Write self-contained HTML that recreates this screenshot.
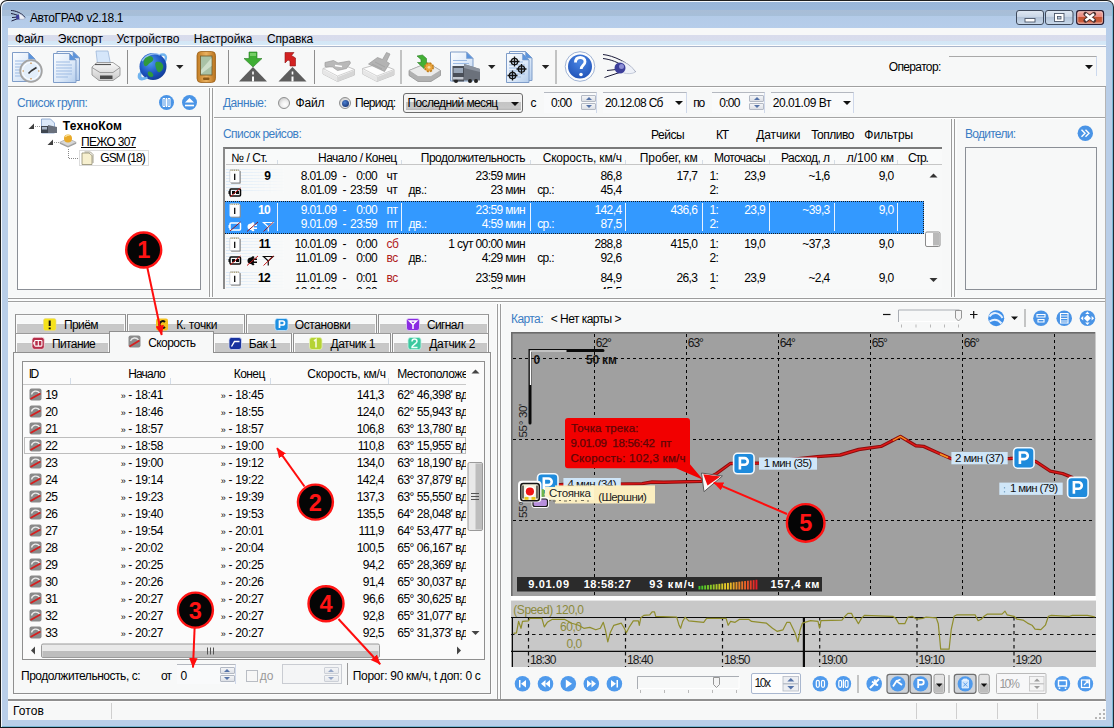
<!DOCTYPE html>
<html><head><meta charset="utf-8">
<style>
*{box-sizing:border-box;margin:0;padding:0}
html,body{width:1114px;height:728px;overflow:hidden}
body{font-family:"Liberation Sans",sans-serif;font-size:11px;color:#000;background:#fff;position:relative}
.a{position:absolute}
.t{position:absolute;white-space:nowrap;line-height:13px;font-size:11px}
.bl{color:#3b7dc4}
.r{text-align:right}
#frame{left:0;top:0;width:1114px;height:728px;background:linear-gradient(#98b5d8 0,#9bb8da 8.500px,#a9bdd6 9px,#a6bfd9 14.500px,#b3cbe8 15.500px,#b6cdea 27px,#b9cee8 60px,#b9cee8 100%);border:1px solid #1e1e1e;border-right:1.500px solid #1e2a36;border-bottom:1.500px solid #101820;border-radius:7px 7px 0 0;box-shadow:inset 1px 1px 0 #f4f8fc,inset -1px -1px 0 #7ab8d4}
#client{left:8px;top:28px;width:1098px;height:692px;background:#f7f8f8}
#menubar{left:8px;top:28px;width:1098px;height:19px;background:linear-gradient(#f7f8f8 0,#f7f8f8 7px,#d9dcec 7.500px,#d8dded 13px,#d4e7f6 13.500px,#d6e9f7 17px,#fdfdfe 17px,#fdfdfe 18px,#a9b5cb 18px)}
#menubar .t{font-size:12px;top:2px;line-height:14px}
.sepv{position:absolute;width:1px;background:#9a9a9a}
.box{position:absolute;background:#fff;border:1px solid #828790}

.sp{position:absolute;width:15px;height:7px;border:1px solid #b3b9c4;background:linear-gradient(#f4f5f7,#dde0e6);border-radius:1px}
.sp:after{content:"";position:absolute;left:3.500px;top:1px;border:3.500px solid transparent}
.sp.u:after{border-bottom:3.500px solid #5573a8;border-top:0}
.sp.d:after{border-top:3.500px solid #5573a8;border-bottom:0;top:1.500px}
.fld{position:absolute;height:21px;border-top:1px solid #b4b8c0;border-right:1px solid #cfd8ea;background:#f9fafb}
.rad{position:absolute;width:12px;height:12px;border-radius:6px;border:1px solid #8e8f8f;background:radial-gradient(circle at 60% 65%,#fff 0,#efefef 40%,#b9b9b9 100%)}
.th{position:absolute;white-space:nowrap;font-size:11px;line-height:13px;top:153px}
.row{position:absolute;left:225px;width:699px;height:33px}
.row .t{top:auto}
</style></head><body>
<div id="frame" class="a"></div>
<div style="position:absolute;white-space:pre;line-height:13px;left:30.00px;top:11.84px;font-size:12px;letter-spacing:-0.385px;">АвтоГРАФ v2.18.1</div>
<div id="client" class="a"></div>
<div id="menubar" class="a"></div>
<div style="position:absolute;white-space:pre;line-height:13px;left:15.10px;top:32.54px;font-size:12px;letter-spacing:-0.305px;">Файл</div>
<div style="position:absolute;white-space:pre;line-height:13px;left:57.80px;top:32.54px;font-size:12px;letter-spacing:0.018px;">Экспорт</div>
<div style="position:absolute;white-space:pre;line-height:13px;left:116.50px;top:32.54px;font-size:12px;letter-spacing:0.024px;">Устройство</div>
<div style="position:absolute;white-space:pre;line-height:13px;left:193.70px;top:32.54px;font-size:12px;letter-spacing:-0.035px;">Настройка</div>
<div style="position:absolute;white-space:pre;line-height:13px;left:267.00px;top:32.54px;font-size:12px;letter-spacing:-0.146px;">Справка</div>

<svg class="a" style="left:8px;top:47px" width="1098" height="41" viewBox="8 47 1098 41">
<defs>
<linearGradient id="gdoc" x1="0" y1="0" x2="1" y2="1"><stop offset="0" stop-color="#fbfdff"/><stop offset="0.600" stop-color="#dbe8f8"/><stop offset="1" stop-color="#b4cdec"/></linearGradient>
<linearGradient id="ggray" x1="0" y1="0" x2="0" y2="1"><stop offset="0" stop-color="#fafafa"/><stop offset="1" stop-color="#c9c9c9"/></linearGradient>
<radialGradient id="gglobe" cx="0.4" cy="0.35" r="0.7"><stop offset="0" stop-color="#4f9bf0"/><stop offset="0.6" stop-color="#1c55c2"/><stop offset="1" stop-color="#123a93"/></radialGradient>
<radialGradient id="ghelp" cx="0.5" cy="0.3" r="0.8"><stop offset="0" stop-color="#4a86e4"/><stop offset="1" stop-color="#1c4db3"/></radialGradient>
<linearGradient id="gpda" x1="0" y1="0" x2="1" y2="0"><stop offset="0" stop-color="#c27c22"/><stop offset="0.5" stop-color="#eab160"/><stop offset="1" stop-color="#b8721c"/></linearGradient>
<g id="doc"><path d="M0.5 0.5h16l6.500 6.500v22.500h-22.500z" fill="url(#gdoc)" stroke="#7f9dc9"/><path d="M16.500 0.500v6.500h6.500z" fill="#5b94dd" stroke="#7f9dc9" stroke-width="0.600"/><path d="M3 9h14M3 12h16M3 15h16M3 18h16M3 21h16M3 24h12" stroke="#9dbbe3" stroke-width="1"/></g>
<g id="road"><path d="M14 0L0 14.500h28z" fill="#5d5d5d"/><path d="M13.200 4.500h1.600v3h-1.600zM13 9.500h2v5h-2z" fill="#fff"/></g>
<path id="dd" d="M0 0h7.500l-3.750 4z" fill="#222"/>
</defs>
<rect x="8" y="47" width="1098" height="39" fill="#f7f8f8"/>
<rect x="8" y="86" width="1098" height="1" fill="#a0a0a0"/>
<rect x="8" y="87" width="1098" height="1" fill="#ffffff"/>
<!-- icon1 doc+clock -->
<use href="#doc" x="12" y="52"/>
<circle cx="31" cy="71" r="10.800" fill="#e3eefa" stroke="#a3a3a3" stroke-width="1.800"/>
<circle cx="31" cy="71" r="8.600" fill="none" stroke="#fff" stroke-width="1"/>
<path d="M31 71l5.500-3.500M31 71l-2.500 2.500" stroke="#333" stroke-width="1.600"/>
<path d="M31 62.500v1.500M31 78v1.500M22.500 71h1.500M38 71h1.500" stroke="#c7873a" stroke-width="1.200"/>
<!-- icon2 docs -->
<use href="#doc" x="56.500" y="51"/>
<use href="#doc" x="53" y="53"/>
<!-- icon3 printer -->
<path d="M96 51h12l2.500 13h-13z" fill="#d5e6fa" stroke="#9db6d8" stroke-width="0.800"/>
<path d="M92 67l5-4.500h16l7 5v8l-7 5h-14l-7-5.500z" fill="url(#ggray)" stroke="#8a8a8a" stroke-width="0.800"/>
<path d="M92 67.500l8 5h13l7-5" fill="none" stroke="#8a8a8a" stroke-width="0.800"/>
<path d="M100 75.500h12.500v3.500h-12.500z" fill="#4b4b4b"/>
<path d="M95 64.500h16" stroke="#555" stroke-width="1.200"/>
<rect x="127" y="50" width="1" height="34" fill="#8e8e8e"/>
<!-- globe -->
<ellipse cx="153" cy="66.500" rx="16.500" ry="6" transform="rotate(-42 153 66.500)" fill="none" stroke="#6fb3ef" stroke-width="2.400"/>
<circle cx="153" cy="66.500" r="13.500" fill="url(#gglobe)"/>
<path d="M146 57c3-2 6-1 7 1s-1 4-3 5-3 4-5 3-2-6 1-9zM156 62c3-1 6 0 7 3s-1 6-3 7-3-1-4-4 -1-5 0-6zM148 72c2-1 4 0 5 2s0 3-2 3-4-3-3-5z" fill="#2f9a3c"/>
<path d="M142 61c4-6 12-9 18-6" fill="none" stroke="#bfe0ff" stroke-width="1.500" opacity="0.700"/>
<path d="M139.500 73.500a16.500 6 -42 0 0 8 4" fill="none" stroke="#6fb3ef" stroke-width="2.400"/>
<use href="#dd" x="176" y="65"/>
<!-- pda -->
<rect x="197" y="51.500" width="18.500" height="31" rx="4" fill="url(#gpda)" stroke="#9a611a" stroke-width="0.800"/>
<rect x="200.500" y="56" width="11.500" height="19" fill="#a9c2a6" stroke="#6f5a2a" stroke-width="0.800"/>
<path d="M201 70l10.500-12v8l-10.500 8z" fill="#d6e5d2" opacity="0.800"/>
<rect x="203" y="77.500" width="6.500" height="2.500" rx="1" fill="#8d5a18"/>
<rect x="228" y="50" width="1" height="34" fill="#8e8e8e"/>
<!-- roads -->
<use href="#road" x="239" y="67"/>
<path d="M249 52h8v6.500h5l-9 8.500-9-8.500h5z" fill="#3fae34" stroke="#2a7c25" stroke-width="0.600"/>
<path d="M250 53h6v3h-6z" fill="#8fdc7c" opacity="0.700"/>
<use href="#road" x="278.500" y="67"/>
<path d="M285 52.500h9l-2.500 3 4 2.500v8h-5.500v-5l-2-1-3 3z" fill="#d32222" stroke="#8e1414" stroke-width="0.600"/>
<rect x="314" y="50" width="1" height="34" fill="#8e8e8e"/>
<!-- scanners -->
<g id="scn"><path d="M323 68.500L340 63.500 354.500 69.500 354.500 75 337.500 81.500 323 74z" fill="#fdfdfd" stroke="#bcbcbc" stroke-width="0.900" stroke-linejoin="round"/>
<path d="M323 68.500L337.500 76 354.500 69.500M337.500 76v5.500" fill="none" stroke="#cdcdcd" stroke-width="0.900"/>
<path d="M323 69.500L337.500 77 337.500 81.500 323 74z" fill="#e6e6e6"/><path d="M337.500 77L354.500 70.300 354.500 75 337.500 81.500z" fill="#d6d6d6"/></g>
<path d="M325 62.500l8.500-2 4.500 2.500 11.500-2 1 2-4 5.500-9 2-5-3.500-7.500-0.500z" fill="#b9b9b9" stroke="#9c9c9c" stroke-width="0.700" stroke-linejoin="round"/>
<path d="M335 65.500l7 1" stroke="#fff" stroke-width="1.600"/>
<use href="#scn" x="39.500" y="0"/>
<path d="M386.500 52.500l3.500 1.500-3.500 7.500 3 2-5 8-16-7.500 9-6.500 5 2z" fill="#b3b3b3" stroke="#9a9a9a" stroke-width="0.700" stroke-linejoin="round"/>
<path d="M372 64l10 5M375 62l10 5" stroke="#9f9f9f" stroke-width="0.700"/>
<rect x="400.500" y="50" width="1" height="34" fill="#8e8e8e"/>
<!-- disk -->
<path d="M409 70.500L420 66 433 66 440.500 70.500 440.500 75.500 431 81.500 418 81.500 409 75.500z" fill="#b1b1b1" stroke="#8c8c8c" stroke-width="0.700" stroke-linejoin="round"/>
<path d="M409 70.500L420 66 433 66 440.500 70.500 431 76.500 418 76.500z" fill="#ebebeb" stroke="#a5a5a5" stroke-width="0.600"/>
<path d="M417 56l5.500-1 4 3.500v4.500l3 0-5.500 5.500-6.500-6h3.500v-3z" fill="#43b035" stroke="#2a7c25" stroke-width="0.600"/>
<circle cx="429" cy="67.300" r="4.200" fill="#eaa43c" stroke="#c07e1c" stroke-width="1.600" stroke-dasharray="2 1.300"/>
<circle cx="429" cy="67.300" r="1.400" fill="#f7d9a0"/>
<!-- truck doc -->
<use href="#doc" x="450" y="51.500"/>
<path d="M452.500 66h11.500v15.500h-11.500z" fill="#4a4f58"/>
<path d="M453.500 68h9.500v5h-9.500z" fill="#9aa7b8"/>
<path d="M464 64l16 5v11.500h-16z" fill="#6b717b"/>
<path d="M464 64l16 5v3l-16-4z" fill="#8b929d"/>
<circle cx="456" cy="81" r="2" fill="#222"/><circle cx="470" cy="81" r="2" fill="#222"/><circle cx="476" cy="81" r="2" fill="#222"/>
<path d="M453 77h10.500v2.500h-10.500z" fill="#c4c9d1"/>
<use href="#dd" x="488" y="65"/>
<!-- dice doc -->
<use href="#doc" x="509" y="51"/>
<use href="#doc" x="506" y="53"/>
<g fill="none" stroke="#111" stroke-width="1.300">
<circle cx="514.500" cy="61.500" r="3.200"/><path d="M514.500 56.500v10M509.500 61.500h10"/>
<circle cx="521.500" cy="69" r="3.200"/><path d="M521.500 64v10M516.500 69h10"/>
<circle cx="512.500" cy="75.500" r="3.200"/><path d="M512.500 70.500v10M507.500 75.500h10"/>
</g>
<use href="#dd" x="541.800" y="65"/>
<rect x="555.500" y="50" width="1" height="34" fill="#8e8e8e"/>
<!-- help -->
<circle cx="580" cy="66.500" r="14.800" fill="#fdfdfe" stroke="#9fb3d4" stroke-width="1"/>
<circle cx="580" cy="66.500" r="12" fill="url(#ghelp)"/>
<path d="M575.500 62.500c0-3.500 2-5 4.800-5s4.700 1.700 4.700 4.200c0 3.500-3.800 3.800-3.800 7.300" fill="none" stroke="#fff" stroke-width="2.800"/>
<circle cx="581" cy="74.500" r="1.800" fill="#fff"/>
<!-- eye -->
<path d="M603 54.500c10 1 26 8 32.500 17.500M603 58.500c8 1 16 4 20 8M607 70.500l14 -1.500M604.500 77.500l15-5" fill="none" stroke="#1b1b3a" stroke-width="1"/>
<path d="M621 61c6 2 12 6 14.500 11-3 2-8 2-12 1" fill="#eef1f8" stroke="#b9c0d2" stroke-width="0.800"/>
<circle cx="620" cy="68" r="5.500" fill="#3d3f9a"/>
<circle cx="621.500" cy="66.500" r="2.500" fill="#8c8fd6"/>
</svg>
<div style="position:absolute;white-space:pre;line-height:13px;left:888.70px;top:61.34px;font-size:12px;letter-spacing:-0.630px;">Оператор:</div>
<div class="a" style="left:949px;top:56px;width:148px;height:19.500px;border-top:1px solid #a9a9a9;border-right:1px solid #ccd9ee"></div>
<svg class="a" style="left:1084.500px;top:65px" width="8" height="5"><path d="M0 0h8l-4 4.200z" fill="#111"/></svg>


<div style="position:absolute;white-space:pre;line-height:13px;left:17.00px;top:97.04px;font-size:12px;letter-spacing:-0.468px;color:#3b7dc4">Список групп:</div>
<svg class="a" style="left:158px;top:94px" width="40" height="17" viewBox="158 94 40 17">
<circle cx="166.500" cy="102.500" r="7.500" fill="#4a94e6"/><circle cx="189.500" cy="102.500" r="7.500" fill="#4a94e6"/>
<path d="M163 98.500h2v8h-2zM168 98.500h2v8h-2z" fill="none" stroke="#fff" stroke-width="1"/><path d="M166.500 98v9" stroke="#fff" stroke-width="1"/>
<path d="M189.500 98l4.500 4.500h-9z" fill="#fff"/><path d="M185 105.500h9" stroke="#fff" stroke-width="1.600"/>
</svg>
<div class="box" style="left:17px;top:116px;width:184px;height:174px;border-color:#8b8f96"></div>
<svg class="a" style="left:18px;top:117px" width="182" height="60" viewBox="18 117 182 60">
<path d="M34 123.500v5.500h-5.500z" fill="#404040"/>
<path d="M35 126.500h5" stroke="#999" stroke-dasharray="1 1"/>
<path d="M41.500 119h9l4 4v10h-13z" fill="#dce9f9" stroke="#7f9dc9" stroke-width="0.800"/>
<path d="M41 126h7v7h-7z" fill="#3f4650"/><path d="M48 125l9 2v6h-9z" fill="#69707c"/><path d="M42 127h5v2.500h-5z" fill="#a9b6c8"/>
<path d="M53 139.500v5.500h-5.500z" fill="#404040"/>
<path d="M54 142.500h5" stroke="#999" stroke-dasharray="1 1"/>
<path d="M59.800 142.300L68 138.300 76.200 142.300 76.200 143.800 68 147.600 59.800 143.800z" fill="#9c9c9c"/><path d="M59.800 142.300L68 138.300 76.200 142.300 68 146.200z" fill="#d6d6d6" stroke="#a9a9a9" stroke-width="0.500"/>
<circle cx="68" cy="138.500" r="4" fill="#e9aa28"/><path d="M65.500 137a3 3 0 0 1 4-1.500" stroke="#fbe29a" stroke-width="1.200" fill="none"/>
<path d="M68.500 149v9.500h10" fill="none" stroke="#888" stroke-dasharray="1 1"/>
<rect x="79.500" y="150.500" width="69" height="15" fill="none" stroke="#b9b9b9" stroke-dasharray="1 1"/>
<path d="M82 153h7l3 2.500v9h-10z" fill="#f7f0cf" stroke="#8f8a70" stroke-width="0.800"/><path d="M84.500 152h6l2.500 2.500v8.500" fill="none" stroke="#8f8a70" stroke-width="0.800"/>
</svg>
<div style="position:absolute;white-space:pre;line-height:13px;left:62.80px;top:120.14px;font-size:12px;letter-spacing:0.189px;font-weight:bold">ТехноКом</div>
<div style="position:absolute;white-space:pre;line-height:13px;left:81.00px;top:135.94px;font-size:12px;letter-spacing:-0.663px;text-decoration:underline">ПЕЖО 307</div>
<div style="position:absolute;white-space:pre;line-height:13px;left:100.30px;top:152.34px;font-size:12px;letter-spacing:-0.945px;">GSM (18)</div>
<!-- v splitter -->
<div class="a" style="left:208px;top:88px;width:7px;height:210px;background:#fbfcfc"></div>
<div class="a" style="left:209px;top:88px;width:1px;height:210px;background:#9c9c9c"></div>
<div class="a" style="left:212px;top:88px;width:1px;height:210px;background:#9c9c9c"></div>
<div style="position:absolute;white-space:pre;line-height:13px;left:222.90px;top:97.04px;font-size:12px;letter-spacing:-0.448px;color:#3b7dc4">Данные:</div>
<div class="rad" style="left:278px;top:97px"></div>
<div style="position:absolute;white-space:pre;line-height:13px;left:295.50px;top:97.04px;font-size:12px;letter-spacing:-0.172px;">Файл</div>
<div class="rad" style="left:338.500px;top:97px"></div><div class="a" style="left:341.500px;top:100px;width:7px;height:7px;border-radius:3.500px;background:radial-gradient(circle at 40% 35%,#4a7fd0,#0e2460)"></div>
<div style="position:absolute;white-space:pre;line-height:13px;left:355.00px;top:97.04px;font-size:12px;letter-spacing:-0.737px;">Период:</div>
<div class="a" style="left:403px;top:92.500px;width:120px;height:20.500px;border:1px solid #6c6c6c;border-radius:3px;background:#f4f4f4"></div>
<div class="a" style="left:406px;top:96px;width:115px;height:14px;background:linear-gradient(#f3f3f3 0,#efefef 6px,#c4c4c4 6.500px,#c8c8c8 12px,#b4b4b4 14px)"></div>
<div style="position:absolute;white-space:pre;line-height:13px;left:407.50px;top:97.04px;font-size:12px;letter-spacing:-0.620px;">Последний месяц</div>
<svg class="a" style="left:510.500px;top:101.500px" width="8" height="4"><path d="M0 0h8l-4 4z" fill="#111"/></svg>
<div style="position:absolute;white-space:pre;line-height:13px;left:530.50px;top:97.04px;font-size:12px;letter-spacing:-0.300px;">с</div>
<div class="fld" style="left:543.6px;top:91.500px;width:53.9px"></div>
<div style="position:absolute;white-space:pre;line-height:13px;left:550.90px;top:97.04px;font-size:12px;letter-spacing:-0.653px;">0:00</div>
<div class="sp u" style="left:581.3px;top:95px"></div><div class="sp d" style="left:581.3px;top:102.500px"></div>
<div class="fld" style="left:603.3px;top:91.500px;width:83.7px"></div>
<div style="position:absolute;white-space:pre;line-height:13px;left:605.00px;top:97.04px;font-size:12px;letter-spacing:-0.709px;">20.12.08 Сб</div>
<svg class="a" style="left:674.9px;top:101px" width="8" height="4"><path d="M0 0h8l-4 4z" fill="#111"/></svg>
<div style="position:absolute;white-space:pre;line-height:13px;left:693.20px;top:97.04px;font-size:12px;letter-spacing:-1.172px;">по</div>
<div class="fld" style="left:711.6px;top:91.500px;width:53.4px"></div>
<div style="position:absolute;white-space:pre;line-height:13px;left:719.30px;top:97.04px;font-size:12px;letter-spacing:-0.720px;">0:00</div>
<div class="sp u" style="left:749.3px;top:95px"></div><div class="sp d" style="left:749.3px;top:102.500px"></div>
<div class="fld" style="left:770.7px;top:91.500px;width:83.8px"></div>
<div style="position:absolute;white-space:pre;line-height:13px;left:772.70px;top:97.04px;font-size:12px;letter-spacing:-0.436px;">20.01.09 Вт</div>
<svg class="a" style="left:843px;top:101px" width="8" height="4"><path d="M0 0h8l-4 4z" fill="#111"/></svg>
<div class="a" style="left:214px;top:117px;width:892px;height:1px;background:#a5a5a5"></div><div class="a" style="left:214px;top:118px;width:892px;height:1px;background:#fff"></div>
<div style="position:absolute;white-space:pre;line-height:13px;left:222.90px;top:128.34px;font-size:12px;letter-spacing:-0.533px;color:#3b7dc4">Список рейсов:</div>
<div style="position:absolute;white-space:pre;line-height:13px;left:651.00px;top:128.84px;font-size:12px;letter-spacing:-0.446px;">Рейсы</div>
<div style="position:absolute;white-space:pre;line-height:13px;left:716.10px;top:128.84px;font-size:12px;letter-spacing:-1.228px;">КТ</div>
<div style="position:absolute;white-space:pre;line-height:13px;left:756.30px;top:128.84px;font-size:12px;letter-spacing:-0.126px;">Датчики</div>
<div style="position:absolute;white-space:pre;line-height:13px;left:811.20px;top:128.84px;font-size:12px;letter-spacing:-0.481px;">Топливо</div>
<div style="position:absolute;white-space:pre;line-height:13px;left:864.30px;top:128.84px;font-size:12px;letter-spacing:-0.006px;">Фильтры</div>
<div class="a" style="left:223px;top:147px;width:719px;height:142.500px;background:#f8f9f9;border-top:2px solid #7a7a7a;border-left:2px solid #8a8a8a;overflow:hidden"></div>
<div class="a" style="left:226px;top:149px;width:716px;height:15.500px;background:#f9fafa;border-bottom:1px solid #c6c6c6"></div>
<div style="position:absolute;white-space:pre;line-height:13px;left:231.20px;top:151.84px;font-size:12px;letter-spacing:-0.424px;">№ / Ст.</div>
<div style="position:absolute;white-space:pre;line-height:13px;left:318.00px;top:151.84px;font-size:12px;letter-spacing:-0.497px;">Начало / Конец</div>
<div style="position:absolute;white-space:pre;line-height:13px;left:420.80px;top:151.84px;font-size:12px;letter-spacing:-0.506px;">Продолжительность</div>
<div style="position:absolute;white-space:pre;line-height:13px;left:542.70px;top:151.84px;font-size:12px;letter-spacing:-0.183px;">Скорость, км/ч</div>
<div style="position:absolute;white-space:pre;line-height:13px;left:639.70px;top:151.84px;font-size:12px;letter-spacing:-0.041px;">Пробег, км</div>
<div style="position:absolute;white-space:pre;line-height:13px;left:713.90px;top:151.84px;font-size:12px;letter-spacing:-0.596px;">Моточасы</div>
<div style="position:absolute;white-space:pre;line-height:13px;left:780.90px;top:151.84px;font-size:12px;letter-spacing:-0.504px;">Расход, л</div>
<div style="position:absolute;white-space:pre;line-height:13px;left:846.70px;top:151.84px;font-size:12px;letter-spacing:0.014px;">л/100 км</div>
<div style="position:absolute;white-space:pre;line-height:13px;left:907.90px;top:151.84px;font-size:12px;letter-spacing:-1.057px;">Стр.</div>
<div class="a" style="left:277px;top:160px;width:1px;height:4px;background:#d5dde6"></div>
<div class="a" style="left:401px;top:160px;width:1px;height:4px;background:#d5dde6"></div>
<div class="a" style="left:529.5px;top:160px;width:1px;height:4px;background:#d5dde6"></div>
<div class="a" style="left:625px;top:160px;width:1px;height:4px;background:#d5dde6"></div>
<div class="a" style="left:701.5px;top:160px;width:1px;height:4px;background:#d5dde6"></div>
<div class="a" style="left:769px;top:160px;width:1px;height:4px;background:#d5dde6"></div>
<div class="a" style="left:833.5px;top:160px;width:1px;height:4px;background:#d5dde6"></div>
<div class="a" style="left:897px;top:160px;width:1px;height:4px;background:#d5dde6"></div>
<div class="a" style="left:226px;top:167.4px;width:60px;height:26px;background:repeating-linear-gradient(#f8f9f9 0,#f8f9f9 2px,#d6e7f8 2px,#d6e7f8 3px);-webkit-mask-image:linear-gradient(90deg,#000,transparent);mask-image:linear-gradient(90deg,#000,transparent);opacity:0.800"></div>
<div style="position:absolute;white-space:pre;line-height:13px;right:843.80px;top:169.74px;font-size:12px;letter-spacing:-0.600px;font-weight:bold;color:#000">9</div>
<div style="position:absolute;white-space:pre;line-height:13px;right:777.50px;top:169.74px;font-size:12px;letter-spacing:-0.600px;color:#000">8.01.09</div>
<div style="position:absolute;white-space:pre;line-height:13px;left:342.50px;top:169.74px;font-size:12px;letter-spacing:-0.500px;color:#000">-</div>
<div style="position:absolute;white-space:pre;line-height:13px;right:736.90px;top:169.74px;font-size:12px;letter-spacing:-0.600px;color:#000">0:00</div>
<div style="position:absolute;white-space:pre;line-height:13px;left:386.50px;top:169.74px;font-size:12px;letter-spacing:-0.480px;color:#000">чт</div>
<div style="position:absolute;white-space:pre;line-height:13px;right:588.90px;top:169.74px;font-size:12px;letter-spacing:-0.600px;color:#000">23:59 мин</div>
<div style="position:absolute;white-space:pre;line-height:13px;right:492.50px;top:169.74px;font-size:12px;letter-spacing:-0.600px;color:#000">86,8</div>
<div style="position:absolute;white-space:pre;line-height:13px;right:416.60px;top:169.74px;font-size:12px;letter-spacing:-0.600px;color:#000">17,7</div>
<div style="position:absolute;white-space:pre;line-height:13px;left:709.40px;top:169.74px;font-size:12px;letter-spacing:-0.480px;color:#000">1:</div>
<div style="position:absolute;white-space:pre;line-height:13px;right:348.80px;top:169.74px;font-size:12px;letter-spacing:-0.600px;color:#000">23,9</div>
<div style="position:absolute;white-space:pre;line-height:13px;right:284.30px;top:169.74px;font-size:12px;letter-spacing:-0.600px;color:#000">~1,6</div>
<div style="position:absolute;white-space:pre;line-height:13px;right:220.40px;top:169.74px;font-size:12px;letter-spacing:-0.600px;color:#000">9,0</div>
<div style="position:absolute;white-space:pre;line-height:13px;right:777.50px;top:183.94px;font-size:12px;letter-spacing:-0.600px;color:#000">8.01.09</div>
<div style="position:absolute;white-space:pre;line-height:13px;left:342.50px;top:183.94px;font-size:12px;letter-spacing:-0.500px;color:#000">-</div>
<div style="position:absolute;white-space:pre;line-height:13px;right:736.90px;top:183.94px;font-size:12px;letter-spacing:-0.600px;color:#000">23:59</div>
<div style="position:absolute;white-space:pre;line-height:13px;left:386.50px;top:183.94px;font-size:12px;letter-spacing:-0.480px;color:#000">чт</div>
<div style="position:absolute;white-space:pre;line-height:13px;left:408.50px;top:183.94px;font-size:12px;letter-spacing:-0.482px;color:#000">дв.:</div>
<div style="position:absolute;white-space:pre;line-height:13px;right:588.90px;top:183.94px;font-size:12px;letter-spacing:-0.600px;color:#000">23 мин</div>
<div style="position:absolute;white-space:pre;line-height:13px;left:537.20px;top:183.94px;font-size:12px;letter-spacing:-0.681px;color:#000">ср.:</div>
<div style="position:absolute;white-space:pre;line-height:13px;right:492.50px;top:183.94px;font-size:12px;letter-spacing:-0.600px;color:#000">45,4</div>
<div style="position:absolute;white-space:pre;line-height:13px;left:709.40px;top:183.94px;font-size:12px;letter-spacing:-0.480px;color:#000">2:</div>
<svg class="a" style="left:228px;top:168.9px" width="48" height="29" viewBox="-1 0 48 29"><rect x="1.800" y="1.800" width="10" height="13" rx="1" fill="#8e8e8e"/><rect x="0.800" y="0.800" width="9.700" height="12.800" rx="1" fill="#fdfdfd" stroke="#b9bec8" stroke-width="0.600"/><path d="M1.500 1.300h8.500" stroke="#a59c74" stroke-width="1.400" stroke-dasharray="1 0.800"/><path d="M5.700 4.800v6.200" stroke="#0a0a0a" stroke-width="1.300"/><rect x="1" y="20" width="10.500" height="7" rx="1" fill="none" stroke="#0a0a0a" stroke-width="1.500"/><path d="M0.200 22v3" stroke="#0a0a0a" stroke-width="1.400"/><path d="M3 22h3v3h-3zM7 22h3v3h-3z" fill="#0a0a0a"/><path d="M1 28l10.500-9" stroke="#c41a1a" stroke-width="1"/></svg>
<div class="a" style="left:225px;top:200.500px;width:699px;height:33px;background:#3399ff;border-top:1px dotted #1a1a1a;border-bottom:1px dotted #1a1a1a;border-right:1px dotted #1a1a1a"></div>
<div class="a" style="left:277px;top:203px;width:1px;height:28px;background:#e8f2ff"></div>
<div class="a" style="left:401px;top:203px;width:1px;height:28px;background:#e8f2ff"></div>
<div class="a" style="left:529.5px;top:203px;width:1px;height:28px;background:#e8f2ff"></div>
<div class="a" style="left:625px;top:203px;width:1px;height:28px;background:#e8f2ff"></div>
<div class="a" style="left:701.5px;top:203px;width:1px;height:28px;background:#e8f2ff"></div>
<div class="a" style="left:769px;top:203px;width:1px;height:28px;background:#e8f2ff"></div>
<div class="a" style="left:833.5px;top:203px;width:1px;height:28px;background:#e8f2ff"></div>
<div class="a" style="left:897px;top:203px;width:1px;height:28px;background:#e8f2ff"></div>
<div style="position:absolute;white-space:pre;line-height:13px;right:843.80px;top:203.74px;font-size:12px;letter-spacing:-0.600px;font-weight:bold;color:#fff">10</div>
<div style="position:absolute;white-space:pre;line-height:13px;right:777.50px;top:203.74px;font-size:12px;letter-spacing:-0.600px;color:#fff">9.01.09</div>
<div style="position:absolute;white-space:pre;line-height:13px;left:342.50px;top:203.74px;font-size:12px;letter-spacing:-0.500px;color:#fff">-</div>
<div style="position:absolute;white-space:pre;line-height:13px;right:736.90px;top:203.74px;font-size:12px;letter-spacing:-0.600px;color:#fff">0:00</div>
<div style="position:absolute;white-space:pre;line-height:13px;left:386.50px;top:203.74px;font-size:12px;letter-spacing:-0.480px;color:#fff">пт</div>
<div style="position:absolute;white-space:pre;line-height:13px;right:588.90px;top:203.74px;font-size:12px;letter-spacing:-0.600px;color:#fff">23:59 мин</div>
<div style="position:absolute;white-space:pre;line-height:13px;right:492.50px;top:203.74px;font-size:12px;letter-spacing:-0.600px;color:#fff">142,4</div>
<div style="position:absolute;white-space:pre;line-height:13px;right:416.60px;top:203.74px;font-size:12px;letter-spacing:-0.600px;color:#fff">436,6</div>
<div style="position:absolute;white-space:pre;line-height:13px;left:709.40px;top:203.74px;font-size:12px;letter-spacing:-0.480px;color:#fff">1:</div>
<div style="position:absolute;white-space:pre;line-height:13px;right:348.80px;top:203.74px;font-size:12px;letter-spacing:-0.600px;color:#fff">23,9</div>
<div style="position:absolute;white-space:pre;line-height:13px;right:284.30px;top:203.74px;font-size:12px;letter-spacing:-0.600px;color:#fff">~39,3</div>
<div style="position:absolute;white-space:pre;line-height:13px;right:220.40px;top:203.74px;font-size:12px;letter-spacing:-0.600px;color:#fff">9,0</div>
<div style="position:absolute;white-space:pre;line-height:13px;right:777.50px;top:217.94px;font-size:12px;letter-spacing:-0.600px;color:#fff">9.01.09</div>
<div style="position:absolute;white-space:pre;line-height:13px;left:342.50px;top:217.94px;font-size:12px;letter-spacing:-0.500px;color:#fff">-</div>
<div style="position:absolute;white-space:pre;line-height:13px;right:736.90px;top:217.94px;font-size:12px;letter-spacing:-0.600px;color:#fff">23:59</div>
<div style="position:absolute;white-space:pre;line-height:13px;left:386.50px;top:217.94px;font-size:12px;letter-spacing:-0.480px;color:#fff">пт</div>
<div style="position:absolute;white-space:pre;line-height:13px;left:408.50px;top:217.94px;font-size:12px;letter-spacing:-0.482px;color:#fff">дв.:</div>
<div style="position:absolute;white-space:pre;line-height:13px;right:588.90px;top:217.94px;font-size:12px;letter-spacing:-0.600px;color:#fff">4:59 мин</div>
<div style="position:absolute;white-space:pre;line-height:13px;left:537.20px;top:217.94px;font-size:12px;letter-spacing:-0.681px;color:#fff">ср.:</div>
<div style="position:absolute;white-space:pre;line-height:13px;right:492.50px;top:217.94px;font-size:12px;letter-spacing:-0.600px;color:#fff">87,5</div>
<div style="position:absolute;white-space:pre;line-height:13px;left:709.40px;top:217.94px;font-size:12px;letter-spacing:-0.480px;color:#fff">2:</div>
<svg class="a" style="left:228px;top:202.9px" width="48" height="29" viewBox="-1 0 48 29"><rect x="1.800" y="1.800" width="10" height="13" rx="1" fill="#8e8e8e"/><rect x="0.800" y="0.800" width="9.700" height="12.800" rx="1" fill="#fdfdfd" stroke="#dfe8f5" stroke-width="0.600"/><path d="M1.500 1.300h8.500" stroke="#a59c74" stroke-width="1.400" stroke-dasharray="1 0.800"/><path d="M5.700 4.800v6.200" stroke="#0a0a0a" stroke-width="1.300"/><rect x="1" y="20" width="10.500" height="7" rx="1" fill="none" stroke="#fff" stroke-width="1.500"/><path d="M0.200 22v3" stroke="#fff" stroke-width="1.400"/><path d="M1 28l10.500-9" stroke="#8e1a2a" stroke-width="1"/><path d="M18.500 23.500c0-2 1.500-3 3.500-3l2-1.500 1.500 1-1 1.500h3.500v1.500h-3v1.500h3v1.500h-3.500l1 1.500-1.500 1-2-1.500c-2 0-3.500-1-3.500-3z" fill="#fff"/><path d="M18 28.500l11-9.500" stroke="#8e1a2a" stroke-width="1"/><path d="M34.500 19.500h9.500l-4.750 4.500zM39.250 23v5.500" fill="none" stroke="#fff" stroke-width="1.200"/><path d="M34.500 28.500l10-9.500" stroke="#8e1a2a" stroke-width="1"/></svg>
<div class="a" style="left:226px;top:235.5px;width:60px;height:26px;background:repeating-linear-gradient(#f8f9f9 0,#f8f9f9 2px,#d6e7f8 2px,#d6e7f8 3px);-webkit-mask-image:linear-gradient(90deg,#000,transparent);mask-image:linear-gradient(90deg,#000,transparent);opacity:0.800"></div>
<div style="position:absolute;white-space:pre;line-height:13px;right:843.80px;top:237.84px;font-size:12px;letter-spacing:-0.600px;font-weight:bold;color:#000">11</div>
<div style="position:absolute;white-space:pre;line-height:13px;right:777.50px;top:237.84px;font-size:12px;letter-spacing:-0.600px;color:#000">10.01.09</div>
<div style="position:absolute;white-space:pre;line-height:13px;left:342.50px;top:237.84px;font-size:12px;letter-spacing:-0.500px;color:#000">-</div>
<div style="position:absolute;white-space:pre;line-height:13px;right:736.90px;top:237.84px;font-size:12px;letter-spacing:-0.600px;color:#000">0:00</div>
<div style="position:absolute;white-space:pre;line-height:13px;left:386.50px;top:237.84px;font-size:12px;letter-spacing:-0.480px;color:#b0201c">сб</div>
<div style="position:absolute;white-space:pre;line-height:13px;right:588.90px;top:237.84px;font-size:12px;letter-spacing:-0.600px;color:#000">1 сут 00:00 мин</div>
<div style="position:absolute;white-space:pre;line-height:13px;right:492.50px;top:237.84px;font-size:12px;letter-spacing:-0.600px;color:#000">288,8</div>
<div style="position:absolute;white-space:pre;line-height:13px;right:416.60px;top:237.84px;font-size:12px;letter-spacing:-0.600px;color:#000">415,0</div>
<div style="position:absolute;white-space:pre;line-height:13px;left:709.40px;top:237.84px;font-size:12px;letter-spacing:-0.480px;color:#000">1:</div>
<div style="position:absolute;white-space:pre;line-height:13px;right:348.80px;top:237.84px;font-size:12px;letter-spacing:-0.600px;color:#000">19,0</div>
<div style="position:absolute;white-space:pre;line-height:13px;right:284.30px;top:237.84px;font-size:12px;letter-spacing:-0.600px;color:#000">~37,3</div>
<div style="position:absolute;white-space:pre;line-height:13px;right:220.40px;top:237.84px;font-size:12px;letter-spacing:-0.600px;color:#000">9,0</div>
<div style="position:absolute;white-space:pre;line-height:13px;right:777.50px;top:252.04px;font-size:12px;letter-spacing:-0.600px;color:#000">11.01.09</div>
<div style="position:absolute;white-space:pre;line-height:13px;left:342.50px;top:252.04px;font-size:12px;letter-spacing:-0.500px;color:#000">-</div>
<div style="position:absolute;white-space:pre;line-height:13px;right:736.90px;top:252.04px;font-size:12px;letter-spacing:-0.600px;color:#000">0:00</div>
<div style="position:absolute;white-space:pre;line-height:13px;left:386.50px;top:252.04px;font-size:12px;letter-spacing:-0.480px;color:#b0201c">вс</div>
<div style="position:absolute;white-space:pre;line-height:13px;left:408.50px;top:252.04px;font-size:12px;letter-spacing:-0.482px;color:#000">дв.:</div>
<div style="position:absolute;white-space:pre;line-height:13px;right:588.90px;top:252.04px;font-size:12px;letter-spacing:-0.600px;color:#000">4:29 мин</div>
<div style="position:absolute;white-space:pre;line-height:13px;left:537.20px;top:252.04px;font-size:12px;letter-spacing:-0.681px;color:#000">ср.:</div>
<div style="position:absolute;white-space:pre;line-height:13px;right:492.50px;top:252.04px;font-size:12px;letter-spacing:-0.600px;color:#000">92,6</div>
<div style="position:absolute;white-space:pre;line-height:13px;left:709.40px;top:252.04px;font-size:12px;letter-spacing:-0.480px;color:#000">2:</div>
<svg class="a" style="left:228px;top:237px" width="48" height="29" viewBox="-1 0 48 29"><rect x="1.800" y="1.800" width="10" height="13" rx="1" fill="#8e8e8e"/><rect x="0.800" y="0.800" width="9.700" height="12.800" rx="1" fill="#fdfdfd" stroke="#b9bec8" stroke-width="0.600"/><path d="M1.500 1.300h8.500" stroke="#a59c74" stroke-width="1.400" stroke-dasharray="1 0.800"/><path d="M5.700 4.800v6.200" stroke="#0a0a0a" stroke-width="1.300"/><rect x="1" y="20" width="10.500" height="7" rx="1" fill="none" stroke="#0a0a0a" stroke-width="1.500"/><path d="M0.200 22v3" stroke="#0a0a0a" stroke-width="1.400"/><path d="M3 22h3v3h-3zM7 22h3v3h-3z" fill="#0a0a0a"/><path d="M1 28l10.500-9" stroke="#c41a1a" stroke-width="1"/><path d="M18.500 23.500c0-2 1.500-3 3.500-3l2-1.500 1.500 1-1 1.500h3.500v1.500h-3v1.500h3v1.500h-3.500l1 1.500-1.500 1-2-1.500c-2 0-3.500-1-3.500-3z" fill="#0a0a0a"/><path d="M18 28.500l11-9.500" stroke="#c41a1a" stroke-width="1"/><path d="M34.500 19.500h9.500l-4.750 4.500zM39.250 23v5.500" fill="none" stroke="#0a0a0a" stroke-width="1.200"/><path d="M34.500 28.500l10-9.500" stroke="#c41a1a" stroke-width="1"/></svg>
<div class="a" style="left:226px;top:269.5px;width:60px;height:26px;background:repeating-linear-gradient(#f8f9f9 0,#f8f9f9 2px,#d6e7f8 2px,#d6e7f8 3px);-webkit-mask-image:linear-gradient(90deg,#000,transparent);mask-image:linear-gradient(90deg,#000,transparent);opacity:0.800"></div>
<div style="position:absolute;white-space:pre;line-height:13px;right:843.80px;top:271.84px;font-size:12px;letter-spacing:-0.600px;font-weight:bold;color:#000">12</div>
<div style="position:absolute;white-space:pre;line-height:13px;right:777.50px;top:271.84px;font-size:12px;letter-spacing:-0.600px;color:#000">11.01.09</div>
<div style="position:absolute;white-space:pre;line-height:13px;left:342.50px;top:271.84px;font-size:12px;letter-spacing:-0.500px;color:#000">-</div>
<div style="position:absolute;white-space:pre;line-height:13px;right:736.90px;top:271.84px;font-size:12px;letter-spacing:-0.600px;color:#000">0:01</div>
<div style="position:absolute;white-space:pre;line-height:13px;left:386.50px;top:271.84px;font-size:12px;letter-spacing:-0.480px;color:#b0201c">вс</div>
<div style="position:absolute;white-space:pre;line-height:13px;right:588.90px;top:271.84px;font-size:12px;letter-spacing:-0.600px;color:#000">23:59 мин</div>
<div style="position:absolute;white-space:pre;line-height:13px;right:492.50px;top:271.84px;font-size:12px;letter-spacing:-0.600px;color:#000">84,9</div>
<div style="position:absolute;white-space:pre;line-height:13px;right:416.60px;top:271.84px;font-size:12px;letter-spacing:-0.600px;color:#000">26,3</div>
<div style="position:absolute;white-space:pre;line-height:13px;left:709.40px;top:271.84px;font-size:12px;letter-spacing:-0.480px;color:#000">1:</div>
<div style="position:absolute;white-space:pre;line-height:13px;right:348.80px;top:271.84px;font-size:12px;letter-spacing:-0.600px;color:#000">23,9</div>
<div style="position:absolute;white-space:pre;line-height:13px;right:284.30px;top:271.84px;font-size:12px;letter-spacing:-0.600px;color:#000">~2,4</div>
<div style="position:absolute;white-space:pre;line-height:13px;right:220.40px;top:271.84px;font-size:12px;letter-spacing:-0.600px;color:#000">9,0</div>
<div style="position:absolute;white-space:pre;line-height:13px;right:777.50px;top:286.04px;font-size:12px;letter-spacing:-0.600px;color:#000">12.01.09</div>
<div style="position:absolute;white-space:pre;line-height:13px;left:342.50px;top:286.04px;font-size:12px;letter-spacing:-0.500px;color:#000">-</div>
<div style="position:absolute;white-space:pre;line-height:13px;right:736.90px;top:286.04px;font-size:12px;letter-spacing:-0.600px;color:#000">0:00</div>
<div style="position:absolute;white-space:pre;line-height:13px;left:386.50px;top:286.04px;font-size:12px;letter-spacing:-0.480px;color:#b0201c">пн</div>
<div style="position:absolute;white-space:pre;line-height:13px;left:408.50px;top:286.04px;font-size:12px;letter-spacing:-0.482px;color:#000">дв.:</div>
<div style="position:absolute;white-space:pre;line-height:13px;right:588.90px;top:286.04px;font-size:12px;letter-spacing:-0.600px;color:#000">23 мин</div>
<div style="position:absolute;white-space:pre;line-height:13px;left:537.20px;top:286.04px;font-size:12px;letter-spacing:-0.681px;color:#000">ср.:</div>
<div style="position:absolute;white-space:pre;line-height:13px;right:492.50px;top:286.04px;font-size:12px;letter-spacing:-0.600px;color:#000">45,5</div>
<div style="position:absolute;white-space:pre;line-height:13px;left:709.40px;top:286.04px;font-size:12px;letter-spacing:-0.480px;color:#000">2:</div>
<svg class="a" style="left:228px;top:271px" width="48" height="29" viewBox="-1 0 48 29"><rect x="1.800" y="1.800" width="10" height="13" rx="1" fill="#8e8e8e"/><rect x="0.800" y="0.800" width="9.700" height="12.800" rx="1" fill="#fdfdfd" stroke="#b9bec8" stroke-width="0.600"/><path d="M1.500 1.300h8.500" stroke="#a59c74" stroke-width="1.400" stroke-dasharray="1 0.800"/><path d="M5.700 4.800v6.200" stroke="#0a0a0a" stroke-width="1.300"/><rect x="1" y="20" width="10.500" height="7" rx="1" fill="none" stroke="#0a0a0a" stroke-width="1.500"/><path d="M0.200 22v3" stroke="#0a0a0a" stroke-width="1.400"/><path d="M3 22h3v3h-3zM7 22h3v3h-3z" fill="#0a0a0a"/><path d="M1 28l10.500-9" stroke="#c41a1a" stroke-width="1"/></svg>
<div class="a" style="left:214px;top:288.500px;width:737px;height:9.500px;background:#f7f8f8"></div>
<svg class="a" style="left:924px;top:170px" width="18" height="115" viewBox="924 170 18 115"><path d="M929.500 177.500h8l-4-4z" fill="#333"/><path d="M929.500 278h8l-4 4z" fill="#333"/><rect x="925.500" y="232" width="14.500" height="14.500" rx="1.500" fill="#fdfdfd" stroke="#8a8a8a"/><rect x="933" y="233" width="6.500" height="12.500" fill="#b9b9b9"/></svg>
<div class="a" style="left:950px;top:119px;width:7px;height:179px;background:#fbfcfc"></div><div class="a" style="left:951px;top:119px;width:1px;height:179px;background:#9c9c9c"></div><div class="a" style="left:954px;top:119px;width:1px;height:179px;background:#9c9c9c"></div>
<div style="position:absolute;white-space:pre;line-height:13px;left:965.00px;top:128.34px;font-size:12px;letter-spacing:-0.725px;color:#3b7dc4">Водители:</div>
<svg class="a" style="left:1077px;top:125px" width="17" height="17"><circle cx="8.300" cy="8.300" r="7.700" fill="#4a94e6"/><path d="M4.500 4.800l3.500 3.500-3.500 3.500M8.500 4.800l3.500 3.500-3.500 3.500" fill="none" stroke="#fff" stroke-width="1.400"/></svg>
<div class="box" style="left:965px;top:147px;width:132px;height:143px;border-color:#8b8f96;background:#f7f8f8"></div>
<div class="a" style="left:8px;top:297px;width:1098px;height:6px;background:#fbfcfc"></div><div class="a" style="left:8px;top:298px;width:1098px;height:1px;background:#9c9c9c"></div><div class="a" style="left:8px;top:301px;width:1098px;height:1px;background:#a0a0a0"></div>
<div class="a" style="left:15px;top:314px;width:111px;height:19px;border:1px solid #8f8f8f;border-bottom:0;border-top-color:#9a9a9a;box-shadow:inset 1px 1px 0 #fbfbfb,inset -1px 0 0 #fbfbfb;background:linear-gradient(#f7f8f8 0,#f7f8f8 8px,#fbfcfc 9px,#c4c4c4 9px,#c8c8c8 10px,#c8c8c8 100%)"></div>
<div class="a" style="left:127px;top:314px;width:118px;height:19px;border:1px solid #8f8f8f;border-bottom:0;border-top-color:#9a9a9a;box-shadow:inset 1px 1px 0 #fbfbfb,inset -1px 0 0 #fbfbfb;background:linear-gradient(#f7f8f8 0,#f7f8f8 8px,#fbfcfc 9px,#c4c4c4 9px,#c8c8c8 10px,#c8c8c8 100%)"></div>
<div class="a" style="left:246px;top:314px;width:131px;height:19px;border:1px solid #8f8f8f;border-bottom:0;border-top-color:#9a9a9a;box-shadow:inset 1px 1px 0 #fbfbfb,inset -1px 0 0 #fbfbfb;background:linear-gradient(#f7f8f8 0,#f7f8f8 8px,#fbfcfc 9px,#c4c4c4 9px,#c8c8c8 10px,#c8c8c8 100%)"></div>
<div class="a" style="left:378px;top:314px;width:111px;height:19px;border:1px solid #8f8f8f;border-bottom:0;border-top-color:#9a9a9a;box-shadow:inset 1px 1px 0 #fbfbfb,inset -1px 0 0 #fbfbfb;background:linear-gradient(#f7f8f8 0,#f7f8f8 8px,#fbfcfc 9px,#c4c4c4 9px,#c8c8c8 10px,#c8c8c8 100%)"></div>
<div class="a" style="left:15px;top:333px;width:95px;height:19px;border:1px solid #8f8f8f;border-bottom:0;border-top-color:#9a9a9a;box-shadow:inset 1px 1px 0 #fbfbfb,inset -1px 0 0 #fbfbfb;background:linear-gradient(#f7f8f8 0,#f7f8f8 8px,#fbfcfc 9px,#c4c4c4 9px,#c8c8c8 10px,#c8c8c8 100%)"></div>
<div class="a" style="left:213px;top:333px;width:79px;height:19px;border:1px solid #8f8f8f;border-bottom:0;border-top-color:#9a9a9a;box-shadow:inset 1px 1px 0 #fbfbfb,inset -1px 0 0 #fbfbfb;background:linear-gradient(#f7f8f8 0,#f7f8f8 8px,#fbfcfc 9px,#c4c4c4 9px,#c8c8c8 10px,#c8c8c8 100%)"></div>
<div class="a" style="left:293px;top:333px;width:98px;height:19px;border:1px solid #8f8f8f;border-bottom:0;border-top-color:#9a9a9a;box-shadow:inset 1px 1px 0 #fbfbfb,inset -1px 0 0 #fbfbfb;background:linear-gradient(#f7f8f8 0,#f7f8f8 8px,#fbfcfc 9px,#c4c4c4 9px,#c8c8c8 10px,#c8c8c8 100%)"></div>
<div class="a" style="left:392px;top:333px;width:97px;height:19px;border:1px solid #8f8f8f;border-bottom:0;border-top-color:#9a9a9a;box-shadow:inset 1px 1px 0 #fbfbfb,inset -1px 0 0 #fbfbfb;background:linear-gradient(#f7f8f8 0,#f7f8f8 8px,#fbfcfc 9px,#c4c4c4 9px,#c8c8c8 10px,#c8c8c8 100%)"></div>
<div class="a" style="left:13px;top:352px;width:478px;height:342px;border:1px solid #8f8f8f;background:#f7f8f8;box-shadow:1px 1px 0 #fdfdfd"></div>
<div class="a" style="left:109px;top:331px;width:105px;height:22px;border:1px solid #8f8f8f;border-bottom:0;background:#f7f8f8"></div>
<svg class="a" style="left:14px;top:314px" width="476" height="38" viewBox="14 314 476 38">
<rect x="43.500" y="318.500" width="12.500" height="12" rx="2" fill="#f5e21c" stroke="#e7d98a" stroke-width="0.600"/><path d="M49.700 320.500v5.500M49.700 327.500v1.800" stroke="#111" stroke-width="2"/>
<rect x="156" y="318.500" width="12" height="12" rx="2" fill="#f5c11c"/><path d="M165 322a3.300 3.300 0 1 0 0 5" fill="none" stroke="#111" stroke-width="2"/>
<rect x="275" y="318.500" width="13" height="12" rx="2.500" fill="#1e8fe0" stroke="#cfe7fa" stroke-width="0.800"/><path d="M279.500 328v-7h3a2 2 0 0 1 0 4h-3" fill="none" stroke="#fff" stroke-width="1.700"/>
<rect x="406.500" y="318.500" width="13" height="12" rx="2.500" fill="#8a2be2" stroke="#e3cff7" stroke-width="0.800"/><path d="M409.500 321h7l-3.500 3.500zM413 324v5" fill="none" stroke="#fff" stroke-width="1.500"/>
<rect x="32" y="337.300" width="12.300" height="12" rx="2.500" fill="#b52d48" stroke="#f6e4e8" stroke-width="0.800"/><rect x="34.700" y="340.500" width="7.200" height="5.600" rx="0.800" fill="none" stroke="#fff" stroke-width="1.100"/><path d="M38.300 340.500v5.600M33.800 342v2.600" stroke="#fff" stroke-width="1.100"/>
<rect x="128.500" y="335.500" width="12" height="12" rx="2" fill="#8c8c8c"/><path d="M130.500 341a4.500 4.500 0 0 1 8 -1" fill="none" stroke="#e8e8e8" stroke-width="1.300"/><path d="M129.500 346.500l10-6" stroke="#d51f1f" stroke-width="1.800"/>
<rect x="229" y="337.500" width="12.500" height="12" rx="2.500" fill="#17329f" stroke="#d5dbf3" stroke-width="0.800"/><path d="M231.500 346.500l3-5h5" fill="none" stroke="#fff" stroke-width="1.400"/>
<rect x="309.500" y="337.500" width="12.500" height="12" rx="2.500" fill="#b5d334" stroke="#e6f1b5" stroke-width="0.800"/><path d="M314 341l2-1.500v8" fill="none" stroke="#f5fadc" stroke-width="1.600"/>
<rect x="408" y="337.500" width="13" height="12" rx="2.500" fill="#3cc9a0" stroke="#c6f1e4" stroke-width="0.800"/><path d="M412 341.500a2.500 2.500 0 0 1 5 0c0 2-5 3.500-5 6h5.500" fill="none" stroke="#f0fffa" stroke-width="1.500"/>
</svg>
<div style="position:absolute;white-space:pre;line-height:13px;left:64.10px;top:319.34px;font-size:12px;letter-spacing:-0.634px;">Приём</div>
<div style="position:absolute;white-space:pre;line-height:13px;left:176.20px;top:319.34px;font-size:12px;letter-spacing:-0.334px;">К. точки</div>
<div style="position:absolute;white-space:pre;line-height:13px;left:294.80px;top:319.34px;font-size:12px;letter-spacing:-0.388px;">Остановки</div>
<div style="position:absolute;white-space:pre;line-height:13px;left:426.90px;top:319.34px;font-size:12px;letter-spacing:-0.632px;">Сигнал</div>
<div style="position:absolute;white-space:pre;line-height:13px;left:52.00px;top:338.14px;font-size:12px;letter-spacing:-0.612px;">Питание</div>
<div style="position:absolute;white-space:pre;line-height:13px;left:148.20px;top:336.94px;font-size:12px;letter-spacing:-0.561px;">Скорость</div>
<div style="position:absolute;white-space:pre;line-height:13px;left:248.80px;top:338.14px;font-size:12px;letter-spacing:-0.478px;">Бак 1</div>
<div style="position:absolute;white-space:pre;line-height:13px;left:330.50px;top:338.14px;font-size:12px;letter-spacing:-0.479px;">Датчик 1</div>
<div style="position:absolute;white-space:pre;line-height:13px;left:429.20px;top:338.14px;font-size:12px;letter-spacing:-0.279px;">Датчик 2</div>
<div class="a" style="left:21.500px;top:360.500px;width:463.500px;height:299.500px;border:1px solid #8f8f8f;background:#fbfbfb"></div>
<div class="a" style="left:23px;top:384px;width:443px;height:1px;background:#c9c9c9"></div>
<div class="a" style="left:70px;top:378px;width:1px;height:6px;background:#d3dde9"></div>
<div class="a" style="left:170px;top:378px;width:1px;height:6px;background:#d3dde9"></div>
<div class="a" style="left:270px;top:378px;width:1px;height:6px;background:#d3dde9"></div>
<div class="a" style="left:388px;top:378px;width:1px;height:6px;background:#d3dde9"></div>
<div style="position:absolute;white-space:pre;line-height:13px;left:28.70px;top:367.94px;font-size:12px;letter-spacing:-1.500px;">ID</div>
<div style="position:absolute;white-space:pre;line-height:13px;left:128.30px;top:367.94px;font-size:12px;letter-spacing:-0.883px;">Начало</div>
<div style="position:absolute;white-space:pre;line-height:13px;left:233.80px;top:367.94px;font-size:12px;letter-spacing:-0.586px;">Конец</div>
<div style="position:absolute;white-space:pre;line-height:13px;left:307.20px;top:367.94px;font-size:12px;letter-spacing:-0.221px;">Скорость, км/ч</div>
<div class="a" style="left:397px;top:364px;width:69.300px;height:18px;overflow:hidden"><div style="position:absolute;white-space:pre;line-height:13px;left:0.20px;top:3.94px;font-size:12px;letter-spacing:-0.480px;">Местоположение</div></div>
<div class="a" style="left:23.500px;top:437px;width:442.500px;height:17px;border:1px solid #bdbdbd;background:transparent"></div>
<svg class="a" style="left:29px;top:387.5px" width="13" height="13"><rect x="0.500" y="0.500" width="12" height="12" rx="2" fill="#8a8a8a"/><path d="M2.500 6.500a4.500 4.500 0 0 1 8 -1.500" fill="none" stroke="#ececec" stroke-width="1.300"/><path d="M1.500 11l10-5.500" stroke="#d51f1f" stroke-width="1.900"/></svg>
<div style="position:absolute;white-space:pre;line-height:13px;left:45.30px;top:389.34px;font-size:12px;letter-spacing:-0.659px;">19</div>
<div style="position:absolute;white-space:pre;line-height:13px;left:120.70px;top:389.34px;font-size:12px;letter-spacing:-0.365px;"><span style="font-size:9px">»</span> - 18:41</div>
<div style="position:absolute;white-space:pre;line-height:13px;left:220.80px;top:389.34px;font-size:12px;letter-spacing:-0.315px;"><span style="font-size:9px">»</span> - 18:45</div>
<div style="position:absolute;white-space:pre;line-height:13px;right:730.20px;top:389.34px;font-size:12px;letter-spacing:-0.600px;">141,3</div>
<div class="a" style="left:397px;top:388.4px;width:69.300px;height:14px;overflow:hidden"><div style="position:absolute;white-space:pre;line-height:13px;left:0.20px;top:0.94px;font-size:12px;letter-spacing:-0.480px;">62° 46,398' вд</div></div>
<svg class="a" style="left:29px;top:404.5px" width="13" height="13"><rect x="0.500" y="0.500" width="12" height="12" rx="2" fill="#8a8a8a"/><path d="M2.500 6.500a4.500 4.500 0 0 1 8 -1.500" fill="none" stroke="#ececec" stroke-width="1.300"/><path d="M1.500 11l10-5.500" stroke="#d51f1f" stroke-width="1.900"/></svg>
<div style="position:absolute;white-space:pre;line-height:13px;left:45.30px;top:406.34px;font-size:12px;letter-spacing:-0.659px;">20</div>
<div style="position:absolute;white-space:pre;line-height:13px;left:120.70px;top:406.34px;font-size:12px;letter-spacing:-0.365px;"><span style="font-size:9px">»</span> - 18:46</div>
<div style="position:absolute;white-space:pre;line-height:13px;left:220.80px;top:406.34px;font-size:12px;letter-spacing:-0.315px;"><span style="font-size:9px">»</span> - 18:55</div>
<div style="position:absolute;white-space:pre;line-height:13px;right:730.20px;top:406.34px;font-size:12px;letter-spacing:-0.600px;">124,0</div>
<div class="a" style="left:397px;top:405.4px;width:69.300px;height:14px;overflow:hidden"><div style="position:absolute;white-space:pre;line-height:13px;left:0.20px;top:0.94px;font-size:12px;letter-spacing:-0.480px;">62° 55,943' вд</div></div>
<svg class="a" style="left:29px;top:421.5px" width="13" height="13"><rect x="0.500" y="0.500" width="12" height="12" rx="2" fill="#8a8a8a"/><path d="M2.500 6.500a4.500 4.500 0 0 1 8 -1.500" fill="none" stroke="#ececec" stroke-width="1.300"/><path d="M1.500 11l10-5.500" stroke="#d51f1f" stroke-width="1.900"/></svg>
<div style="position:absolute;white-space:pre;line-height:13px;left:45.30px;top:423.34px;font-size:12px;letter-spacing:-0.659px;">21</div>
<div style="position:absolute;white-space:pre;line-height:13px;left:120.70px;top:423.34px;font-size:12px;letter-spacing:-0.365px;"><span style="font-size:9px">»</span> - 18:57</div>
<div style="position:absolute;white-space:pre;line-height:13px;left:220.80px;top:423.34px;font-size:12px;letter-spacing:-0.315px;"><span style="font-size:9px">»</span> - 18:57</div>
<div style="position:absolute;white-space:pre;line-height:13px;right:730.20px;top:423.34px;font-size:12px;letter-spacing:-0.600px;">106,8</div>
<div class="a" style="left:397px;top:422.4px;width:69.300px;height:14px;overflow:hidden"><div style="position:absolute;white-space:pre;line-height:13px;left:0.20px;top:0.94px;font-size:12px;letter-spacing:-0.480px;">63° 13,780' вд</div></div>
<svg class="a" style="left:29px;top:438.5px" width="13" height="13"><rect x="0.500" y="0.500" width="12" height="12" rx="2" fill="#8a8a8a"/><path d="M2.500 6.500a4.500 4.500 0 0 1 8 -1.500" fill="none" stroke="#ececec" stroke-width="1.300"/><path d="M1.500 11l10-5.500" stroke="#d51f1f" stroke-width="1.900"/></svg>
<div style="position:absolute;white-space:pre;line-height:13px;left:45.30px;top:440.34px;font-size:12px;letter-spacing:-0.659px;">22</div>
<div style="position:absolute;white-space:pre;line-height:13px;left:120.70px;top:440.34px;font-size:12px;letter-spacing:-0.365px;"><span style="font-size:9px">»</span> - 18:58</div>
<div style="position:absolute;white-space:pre;line-height:13px;left:220.80px;top:440.34px;font-size:12px;letter-spacing:-0.315px;"><span style="font-size:9px">»</span> - 19:00</div>
<div style="position:absolute;white-space:pre;line-height:13px;right:730.20px;top:440.34px;font-size:12px;letter-spacing:-0.600px;">110,8</div>
<div class="a" style="left:397px;top:439.4px;width:69.300px;height:14px;overflow:hidden"><div style="position:absolute;white-space:pre;line-height:13px;left:0.20px;top:0.94px;font-size:12px;letter-spacing:-0.480px;">63° 15,955' вд</div></div>
<svg class="a" style="left:29px;top:455.5px" width="13" height="13"><rect x="0.500" y="0.500" width="12" height="12" rx="2" fill="#8a8a8a"/><path d="M2.500 6.500a4.500 4.500 0 0 1 8 -1.500" fill="none" stroke="#ececec" stroke-width="1.300"/><path d="M1.500 11l10-5.500" stroke="#d51f1f" stroke-width="1.900"/></svg>
<div style="position:absolute;white-space:pre;line-height:13px;left:45.30px;top:457.34px;font-size:12px;letter-spacing:-0.659px;">23</div>
<div style="position:absolute;white-space:pre;line-height:13px;left:120.70px;top:457.34px;font-size:12px;letter-spacing:-0.365px;"><span style="font-size:9px">»</span> - 19:00</div>
<div style="position:absolute;white-space:pre;line-height:13px;left:220.80px;top:457.34px;font-size:12px;letter-spacing:-0.315px;"><span style="font-size:9px">»</span> - 19:12</div>
<div style="position:absolute;white-space:pre;line-height:13px;right:730.20px;top:457.34px;font-size:12px;letter-spacing:-0.600px;">134,0</div>
<div class="a" style="left:397px;top:456.4px;width:69.300px;height:14px;overflow:hidden"><div style="position:absolute;white-space:pre;line-height:13px;left:0.20px;top:0.94px;font-size:12px;letter-spacing:-0.480px;">63° 18,190' вд</div></div>
<svg class="a" style="left:29px;top:472.5px" width="13" height="13"><rect x="0.500" y="0.500" width="12" height="12" rx="2" fill="#8a8a8a"/><path d="M2.500 6.500a4.500 4.500 0 0 1 8 -1.500" fill="none" stroke="#ececec" stroke-width="1.300"/><path d="M1.500 11l10-5.500" stroke="#d51f1f" stroke-width="1.900"/></svg>
<div style="position:absolute;white-space:pre;line-height:13px;left:45.30px;top:474.34px;font-size:12px;letter-spacing:-0.659px;">24</div>
<div style="position:absolute;white-space:pre;line-height:13px;left:120.70px;top:474.34px;font-size:12px;letter-spacing:-0.365px;"><span style="font-size:9px">»</span> - 19:14</div>
<div style="position:absolute;white-space:pre;line-height:13px;left:220.80px;top:474.34px;font-size:12px;letter-spacing:-0.315px;"><span style="font-size:9px">»</span> - 19:22</div>
<div style="position:absolute;white-space:pre;line-height:13px;right:730.20px;top:474.34px;font-size:12px;letter-spacing:-0.600px;">142,4</div>
<div class="a" style="left:397px;top:473.4px;width:69.300px;height:14px;overflow:hidden"><div style="position:absolute;white-space:pre;line-height:13px;left:0.20px;top:0.94px;font-size:12px;letter-spacing:-0.480px;">63° 37,879' вд</div></div>
<svg class="a" style="left:29px;top:489.5px" width="13" height="13"><rect x="0.500" y="0.500" width="12" height="12" rx="2" fill="#8a8a8a"/><path d="M2.500 6.500a4.500 4.500 0 0 1 8 -1.500" fill="none" stroke="#ececec" stroke-width="1.300"/><path d="M1.500 11l10-5.500" stroke="#d51f1f" stroke-width="1.900"/></svg>
<div style="position:absolute;white-space:pre;line-height:13px;left:45.30px;top:491.34px;font-size:12px;letter-spacing:-0.659px;">25</div>
<div style="position:absolute;white-space:pre;line-height:13px;left:120.70px;top:491.34px;font-size:12px;letter-spacing:-0.365px;"><span style="font-size:9px">»</span> - 19:23</div>
<div style="position:absolute;white-space:pre;line-height:13px;left:220.80px;top:491.34px;font-size:12px;letter-spacing:-0.315px;"><span style="font-size:9px">»</span> - 19:39</div>
<div style="position:absolute;white-space:pre;line-height:13px;right:730.20px;top:491.34px;font-size:12px;letter-spacing:-0.600px;">137,3</div>
<div class="a" style="left:397px;top:490.4px;width:69.300px;height:14px;overflow:hidden"><div style="position:absolute;white-space:pre;line-height:13px;left:0.20px;top:0.94px;font-size:12px;letter-spacing:-0.480px;">63° 55,550' вд</div></div>
<svg class="a" style="left:29px;top:506.5px" width="13" height="13"><rect x="0.500" y="0.500" width="12" height="12" rx="2" fill="#8a8a8a"/><path d="M2.500 6.500a4.500 4.500 0 0 1 8 -1.500" fill="none" stroke="#ececec" stroke-width="1.300"/><path d="M1.500 11l10-5.500" stroke="#d51f1f" stroke-width="1.900"/></svg>
<div style="position:absolute;white-space:pre;line-height:13px;left:45.30px;top:508.34px;font-size:12px;letter-spacing:-0.659px;">26</div>
<div style="position:absolute;white-space:pre;line-height:13px;left:120.70px;top:508.34px;font-size:12px;letter-spacing:-0.365px;"><span style="font-size:9px">»</span> - 19:40</div>
<div style="position:absolute;white-space:pre;line-height:13px;left:220.80px;top:508.34px;font-size:12px;letter-spacing:-0.315px;"><span style="font-size:9px">»</span> - 19:53</div>
<div style="position:absolute;white-space:pre;line-height:13px;right:730.20px;top:508.34px;font-size:12px;letter-spacing:-0.600px;">135,5</div>
<div class="a" style="left:397px;top:507.4px;width:69.300px;height:14px;overflow:hidden"><div style="position:absolute;white-space:pre;line-height:13px;left:0.20px;top:0.94px;font-size:12px;letter-spacing:-0.480px;">64° 28,048' вд</div></div>
<svg class="a" style="left:29px;top:523.5px" width="13" height="13"><rect x="0.500" y="0.500" width="12" height="12" rx="2" fill="#8a8a8a"/><path d="M2.500 6.500a4.500 4.500 0 0 1 8 -1.500" fill="none" stroke="#ececec" stroke-width="1.300"/><path d="M1.500 11l10-5.500" stroke="#d51f1f" stroke-width="1.900"/></svg>
<div style="position:absolute;white-space:pre;line-height:13px;left:45.30px;top:525.34px;font-size:12px;letter-spacing:-0.659px;">27</div>
<div style="position:absolute;white-space:pre;line-height:13px;left:120.70px;top:525.34px;font-size:12px;letter-spacing:-0.365px;"><span style="font-size:9px">»</span> - 19:54</div>
<div style="position:absolute;white-space:pre;line-height:13px;left:220.80px;top:525.34px;font-size:12px;letter-spacing:-0.315px;"><span style="font-size:9px">»</span> - 20:01</div>
<div style="position:absolute;white-space:pre;line-height:13px;right:730.20px;top:525.34px;font-size:12px;letter-spacing:-0.600px;">111,9</div>
<div class="a" style="left:397px;top:524.4px;width:69.300px;height:14px;overflow:hidden"><div style="position:absolute;white-space:pre;line-height:13px;left:0.20px;top:0.94px;font-size:12px;letter-spacing:-0.480px;">64° 53,477' вд</div></div>
<svg class="a" style="left:29px;top:540.5px" width="13" height="13"><rect x="0.500" y="0.500" width="12" height="12" rx="2" fill="#8a8a8a"/><path d="M2.500 6.500a4.500 4.500 0 0 1 8 -1.500" fill="none" stroke="#ececec" stroke-width="1.300"/><path d="M1.500 11l10-5.500" stroke="#d51f1f" stroke-width="1.900"/></svg>
<div style="position:absolute;white-space:pre;line-height:13px;left:45.30px;top:542.34px;font-size:12px;letter-spacing:-0.659px;">28</div>
<div style="position:absolute;white-space:pre;line-height:13px;left:120.70px;top:542.34px;font-size:12px;letter-spacing:-0.365px;"><span style="font-size:9px">»</span> - 20:02</div>
<div style="position:absolute;white-space:pre;line-height:13px;left:220.80px;top:542.34px;font-size:12px;letter-spacing:-0.315px;"><span style="font-size:9px">»</span> - 20:04</div>
<div style="position:absolute;white-space:pre;line-height:13px;right:730.20px;top:542.34px;font-size:12px;letter-spacing:-0.600px;">100,5</div>
<div class="a" style="left:397px;top:541.4px;width:69.300px;height:14px;overflow:hidden"><div style="position:absolute;white-space:pre;line-height:13px;left:0.20px;top:0.94px;font-size:12px;letter-spacing:-0.480px;">65° 06,167' вд</div></div>
<svg class="a" style="left:29px;top:557.5px" width="13" height="13"><rect x="0.500" y="0.500" width="12" height="12" rx="2" fill="#8a8a8a"/><path d="M2.500 6.500a4.500 4.500 0 0 1 8 -1.500" fill="none" stroke="#ececec" stroke-width="1.300"/><path d="M1.500 11l10-5.500" stroke="#d51f1f" stroke-width="1.900"/></svg>
<div style="position:absolute;white-space:pre;line-height:13px;left:45.30px;top:559.34px;font-size:12px;letter-spacing:-0.659px;">29</div>
<div style="position:absolute;white-space:pre;line-height:13px;left:120.70px;top:559.34px;font-size:12px;letter-spacing:-0.365px;"><span style="font-size:9px">»</span> - 20:25</div>
<div style="position:absolute;white-space:pre;line-height:13px;left:220.80px;top:559.34px;font-size:12px;letter-spacing:-0.315px;"><span style="font-size:9px">»</span> - 20:25</div>
<div style="position:absolute;white-space:pre;line-height:13px;right:730.20px;top:559.34px;font-size:12px;letter-spacing:-0.600px;">94,2</div>
<div class="a" style="left:397px;top:558.4px;width:69.300px;height:14px;overflow:hidden"><div style="position:absolute;white-space:pre;line-height:13px;left:0.20px;top:0.94px;font-size:12px;letter-spacing:-0.480px;">65° 28,369' вд</div></div>
<svg class="a" style="left:29px;top:574.5px" width="13" height="13"><rect x="0.500" y="0.500" width="12" height="12" rx="2" fill="#8a8a8a"/><path d="M2.500 6.500a4.500 4.500 0 0 1 8 -1.500" fill="none" stroke="#ececec" stroke-width="1.300"/><path d="M1.500 11l10-5.500" stroke="#d51f1f" stroke-width="1.900"/></svg>
<div style="position:absolute;white-space:pre;line-height:13px;left:45.30px;top:576.34px;font-size:12px;letter-spacing:-0.659px;">30</div>
<div style="position:absolute;white-space:pre;line-height:13px;left:120.70px;top:576.34px;font-size:12px;letter-spacing:-0.365px;"><span style="font-size:9px">»</span> - 20:26</div>
<div style="position:absolute;white-space:pre;line-height:13px;left:220.80px;top:576.34px;font-size:12px;letter-spacing:-0.315px;"><span style="font-size:9px">»</span> - 20:26</div>
<div style="position:absolute;white-space:pre;line-height:13px;right:730.20px;top:576.34px;font-size:12px;letter-spacing:-0.600px;">91,4</div>
<div class="a" style="left:397px;top:575.4px;width:69.300px;height:14px;overflow:hidden"><div style="position:absolute;white-space:pre;line-height:13px;left:0.20px;top:0.94px;font-size:12px;letter-spacing:-0.480px;">65° 30,037' вд</div></div>
<svg class="a" style="left:29px;top:591.5px" width="13" height="13"><rect x="0.500" y="0.500" width="12" height="12" rx="2" fill="#8a8a8a"/><path d="M2.500 6.500a4.500 4.500 0 0 1 8 -1.500" fill="none" stroke="#ececec" stroke-width="1.300"/><path d="M1.500 11l10-5.500" stroke="#d51f1f" stroke-width="1.900"/></svg>
<div style="position:absolute;white-space:pre;line-height:13px;left:45.30px;top:593.34px;font-size:12px;letter-spacing:-0.659px;">31</div>
<div style="position:absolute;white-space:pre;line-height:13px;left:120.70px;top:593.34px;font-size:12px;letter-spacing:-0.365px;"><span style="font-size:9px">»</span> - 20:27</div>
<div style="position:absolute;white-space:pre;line-height:13px;left:220.80px;top:593.34px;font-size:12px;letter-spacing:-0.315px;"><span style="font-size:9px">»</span> - 20:27</div>
<div style="position:absolute;white-space:pre;line-height:13px;right:730.20px;top:593.34px;font-size:12px;letter-spacing:-0.600px;">96,6</div>
<div class="a" style="left:397px;top:592.4px;width:69.300px;height:14px;overflow:hidden"><div style="position:absolute;white-space:pre;line-height:13px;left:0.20px;top:0.94px;font-size:12px;letter-spacing:-0.480px;">65° 30,625' вд</div></div>
<svg class="a" style="left:29px;top:608.5px" width="13" height="13"><rect x="0.500" y="0.500" width="12" height="12" rx="2" fill="#8a8a8a"/><path d="M2.500 6.500a4.500 4.500 0 0 1 8 -1.500" fill="none" stroke="#ececec" stroke-width="1.300"/><path d="M1.500 11l10-5.500" stroke="#d51f1f" stroke-width="1.900"/></svg>
<div style="position:absolute;white-space:pre;line-height:13px;left:45.30px;top:610.34px;font-size:12px;letter-spacing:-0.659px;">32</div>
<div style="position:absolute;white-space:pre;line-height:13px;left:120.70px;top:610.34px;font-size:12px;letter-spacing:-0.365px;"><span style="font-size:9px">»</span> - 20:27</div>
<div style="position:absolute;white-space:pre;line-height:13px;left:220.80px;top:610.34px;font-size:12px;letter-spacing:-0.315px;"><span style="font-size:9px">»</span> - 20:27</div>
<div style="position:absolute;white-space:pre;line-height:13px;right:730.20px;top:610.34px;font-size:12px;letter-spacing:-0.600px;">92,8</div>
<div class="a" style="left:397px;top:609.4px;width:69.300px;height:14px;overflow:hidden"><div style="position:absolute;white-space:pre;line-height:13px;left:0.20px;top:0.94px;font-size:12px;letter-spacing:-0.480px;">65° 31,077' вд</div></div>
<svg class="a" style="left:29px;top:625.5px" width="13" height="13"><rect x="0.500" y="0.500" width="12" height="12" rx="2" fill="#8a8a8a"/><path d="M2.500 6.500a4.500 4.500 0 0 1 8 -1.500" fill="none" stroke="#ececec" stroke-width="1.300"/><path d="M1.500 11l10-5.500" stroke="#d51f1f" stroke-width="1.900"/></svg>
<div style="position:absolute;white-space:pre;line-height:13px;left:45.30px;top:627.34px;font-size:12px;letter-spacing:-0.659px;">33</div>
<div style="position:absolute;white-space:pre;line-height:13px;left:120.70px;top:627.34px;font-size:12px;letter-spacing:-0.365px;"><span style="font-size:9px">»</span> - 20:27</div>
<div style="position:absolute;white-space:pre;line-height:13px;left:220.80px;top:627.34px;font-size:12px;letter-spacing:-0.315px;"><span style="font-size:9px">»</span> - 20:27</div>
<div style="position:absolute;white-space:pre;line-height:13px;right:730.20px;top:627.34px;font-size:12px;letter-spacing:-0.600px;">92,5</div>
<div class="a" style="left:397px;top:626.4px;width:69.300px;height:14px;overflow:hidden"><div style="position:absolute;white-space:pre;line-height:13px;left:0.20px;top:0.94px;font-size:12px;letter-spacing:-0.480px;">65° 31,373' вд</div></div>
<svg class="a" style="left:467px;top:362px" width="17" height="280" viewBox="467 362 17 280"><rect x="467" y="362" width="17" height="280" fill="#fbfbfb"/><path d="M471.500 373.500h8l-4-4z" fill="#444"/><path d="M471.500 631h8l-4 4z" fill="#444"/><rect x="468" y="462.500" width="14.500" height="68" rx="1.500" fill="#e9e9e9" stroke="#9a9a9a"/><rect x="475.500" y="463.500" width="6.500" height="66" fill="#bdbdbd"/><path d="M471 493.500h8M471 496.500h8M471 499.500h8" stroke="#555" stroke-width="1"/></svg>
<svg class="a" style="left:23px;top:643px" width="461" height="16" viewBox="23 643 461 16"><rect x="23" y="643" width="461" height="16" fill="#fbfbfb"/><path d="M35 646.500v8l-4-4z" fill="#444"/><path d="M457 646.500v8l4-4z" fill="#444"/><rect x="41.500" y="644" width="338" height="13.500" rx="1.500" fill="#e9e9e9" stroke="#9a9a9a"/><rect x="42.500" y="651" width="336" height="6" fill="#bdbdbd"/><path d="M207.500 647.500v7M210.500 647.500v7M213.500 647.500v7" stroke="#555"/></svg>
<div style="position:absolute;white-space:pre;line-height:13px;left:21.00px;top:669.74px;font-size:12px;letter-spacing:-0.465px;">Продолжительность, с:</div>
<div style="position:absolute;white-space:pre;line-height:13px;left:161.10px;top:669.74px;font-size:12px;letter-spacing:-1.006px;">от</div>
<div class="fld" style="left:177px;top:664px;width:59px;height:20px"></div>
<div style="position:absolute;white-space:pre;line-height:13px;left:180.50px;top:669.74px;font-size:12px;letter-spacing:-0.480px;">0</div>
<div class="sp u" style="left:219.500px;top:667px"></div><div class="sp d" style="left:219.500px;top:674.500px"></div>
<div class="a" style="left:245.500px;top:669.500px;width:12px;height:12px;border:1px solid #b9bdc4;background:#f7f7f7"></div>
<div style="position:absolute;white-space:pre;line-height:13px;left:259.80px;top:669.74px;font-size:12px;letter-spacing:-0.088px;color:#9a9a9a">до</div>
<div class="a" style="left:281.500px;top:664px;width:60px;height:20px;border:1px solid #c9ccd2;background:#f4f5f6"></div>
<div class="sp u" style="left:323.500px;top:667px;opacity:0.600"></div><div class="sp d" style="left:323.500px;top:674.500px;opacity:0.600"></div>
<div class="a" style="left:346.500px;top:663px;width:1px;height:22px;background:#9a9a9a"></div>
<div style="position:absolute;white-space:pre;line-height:13px;left:352.70px;top:669.74px;font-size:12px;letter-spacing:-0.302px;">Порог: 90 км/ч, t доп: 0 с</div>
<div class="a" style="left:496px;top:303px;width:6px;height:396px;background:#fbfcfc"></div><div class="a" style="left:497px;top:304px;width:1px;height:395px;background:#9c9c9c"></div><div class="a" style="left:500px;top:304px;width:1px;height:395px;background:#9c9c9c"></div>
<div class="a" style="left:8px;top:699px;width:1098px;height:2px;background:#8f8f8f"></div><div class="a" style="left:8px;top:701px;width:1098px;height:1px;background:#fdfdfd"></div><div class="a" style="left:8px;top:702px;width:1098px;height:18px;background:#f7f8f8"></div>
<div style="position:absolute;white-space:pre;line-height:13px;left:13.00px;top:704.74px;font-size:12px;letter-spacing:0.121px;">Готов</div>
<div class="a" style="left:110.5px;top:703px;width:1px;height:16px;background:#cfcfcf"></div>
<div class="a" style="left:916px;top:703px;width:1px;height:16px;background:#cfcfcf"></div>
<div class="a" style="left:956px;top:703px;width:1px;height:16px;background:#cfcfcf"></div>
<div class="a" style="left:996.5px;top:703px;width:1px;height:16px;background:#cfcfcf"></div>
<div class="a" style="left:1036.5px;top:703px;width:1px;height:16px;background:#cfcfcf"></div>
<div style="position:absolute;white-space:pre;line-height:13px;left:511.00px;top:313.44px;font-size:12px;letter-spacing:-0.591px;color:#3b7dc4">Карта:</div>
<div style="position:absolute;white-space:pre;line-height:13px;left:550.80px;top:313.44px;font-size:12px;letter-spacing:-0.541px;">&lt; Нет карты &gt;</div>
<svg class="a" style="left:878px;top:305px" width="222" height="26" viewBox="878 305 222 26">
<path d="M883 314.500h7.500" stroke="#111" stroke-width="1.200"/><path d="M970 314.500h7.500M973.700 311v7.500" stroke="#111" stroke-width="1.200"/>
<path d="M898.500 322v-12h61" fill="none" stroke="#a9adb3" stroke-width="1"/><path d="M899.500 321.500h60v-11" fill="none" stroke="#fff" stroke-width="1"/>
<path d="M901.500 324.500v3M916 324.500v3M930.500 324.500v3M944.500 324.500v3M958.500 324.500v3" stroke="#b9b9b9"/>
<path d="M955.500 310.500h6v7.500l-3 3-3-3z" fill="#f4f4f4" stroke="#8b8b8b" stroke-width="0.900"/>
<circle cx="996.200" cy="318.200" r="8" fill="#3f8fe8"/><path d="M989.500 316.500c3-4.500 9-5 13 1.500M989.500 321.500c4.500-3 9-1.500 12 2" fill="none" stroke="#e6f1ff" stroke-width="2"/>
<path d="M1011 316.500h7l-3.500 3.500z" fill="#111"/>
<rect x="1024.500" y="309" width="1" height="18" fill="#8f8f8f"/>
<circle cx="1041" cy="318.200" r="7.800" fill="#4a94e6"/>
<circle cx="1064.2" cy="318.200" r="7.800" fill="#4a94e6"/>
<circle cx="1087.4" cy="318.200" r="7.800" fill="#4a94e6"/>
<path d="M1037 314.500h8v2.500h-8zM1038 319.500h6v2.500h-6z" fill="none" stroke="#fff" stroke-width="1.100"/>
<path d="M1060.500 313.500h7.500v9.500h-7.500z" fill="none" stroke="#fff" stroke-width="1.100"/><path d="M1061 316h6.500M1061 318.500h6.500M1061 321h6.500" stroke="#fff" stroke-width="0.900"/>
<path d="M1087.400 314.700l3.500 3.500-3.500 3.500-3.500-3.500z" fill="#fff"/><path d="M1087.400 311.500l2.200 2.500h-4.400zM1087.400 324.900l2.200-2.500h-4.400zM1080.700 318.200l2.500-2.200v4.400zM1094.100 318.200l-2.500-2.200v4.400z" fill="#fff"/>
</svg>
<svg class="a" style="left:511px;top:332px" width="585" height="264" viewBox="511 332 585 264" font-family="Liberation Sans, sans-serif">
<rect x="511" y="332" width="585" height="264" fill="#a0a0a0"/>
<rect x="511" y="332" width="585" height="1.600" fill="#6b6b6b"/><rect x="511" y="332" width="1.600" height="264" fill="#6b6b6b"/><rect x="1095" y="332" width="1" height="264" fill="#c9c9c9"/>
<g stroke="#050505" stroke-width="1" stroke-dasharray="3 3" fill="none">
<path d="M594.5 334v262"/>
<path d="M686.5 334v262"/>
<path d="M778.5 334v262"/>
<path d="M870.5 334v262"/>
<path d="M962.5 334v262"/>
<path d="M1054.5 334v262"/>
<path d="M513 358.5h582"/>
<path d="M513 439.5h582"/>
<path d="M513 520.5h582"/>
</g>
<text x="595.8" y="346.900" font-size="12" fill="#151515" textLength="16" lengthAdjust="spacing">62°</text>
<text x="687.8" y="346.900" font-size="12" fill="#151515" textLength="16" lengthAdjust="spacing">63°</text>
<text x="779.8" y="346.900" font-size="12" fill="#151515" textLength="16" lengthAdjust="spacing">64°</text>
<text x="871.8" y="346.900" font-size="12" fill="#151515" textLength="16" lengthAdjust="spacing">65°</text>
<text x="963.8" y="346.900" font-size="12" fill="#151515" textLength="16" lengthAdjust="spacing">66°</text>
<text transform="translate(526.500 437.500) rotate(-90)" font-size="11.500" fill="#1a1a1a" letter-spacing="-0.300">55° 30'</text>
<text transform="translate(526.500 518) rotate(-90)" font-size="11.500" fill="#1a1a1a" letter-spacing="-0.300">55° 00'</text>
<path d="M530 423v-72.500h73" fill="none" stroke="#0a0a0a" stroke-width="3" stroke-linecap="round"/>
<path d="M530.500 385v-34h36" fill="none" stroke="#fff" stroke-width="1.300"/>
<text x="533.500" y="364.200" font-size="12" font-weight="bold" fill="#111">0</text><text x="586" y="364.200" font-size="12" font-weight="bold" fill="#111" letter-spacing="-0.200">50 км</text>
<path d="M546 486L563.400 484.500 600 484.500 642.200 483.600 652 482 663.800 482.300 700.900 481.400 716.400 473.700 730.300 463.500 760 463 817 456.600 840.200 455 858.700 449.500 881 446.400 900.400 436.500 915.900 445.800 923.600 446.400 936 452 951.400 458.800 1010 458.500 1024 457.900 1036.400 461.900 1050.300 471.100 1062.700 473.600 1072 477.300 1078 488" fill="none" stroke="#8c0d0d" stroke-width="3.400" stroke-linejoin="round"/>
<path d="M546 486L563.400 484.500 600 484.500 642.200 483.600 652 482 663.800 482.300 700.900 481.400 716.400 473.700 730.300 463.500 760 463 817 456.600 840.200 455 858.700 449.500 881 446.400 900.400 436.500 915.900 445.800 923.600 446.400 936 452 951.400 458.800 1010 458.500 1024 457.900 1036.400 461.900 1050.300 471.100 1062.700 473.600 1072 477.300 1078 488" fill="none" stroke="#e01818" stroke-width="1.400" stroke-linejoin="round"/>
<path d="M893 440.500l7.400-4 6 3.500" fill="none" stroke="#f39a1c" stroke-width="1.400"/><path d="M940 454l8 3.500" fill="none" stroke="#f39a1c" stroke-width="1.400"/>
<rect x="563.4" y="478" width="57.4" height="14" fill="#cfe6f8"/>
<text x="567.5" y="487.8" font-size="11.500" fill="#111" textLength="49" lengthAdjust="spacing">4 мин (34)</text>
<rect x="759" y="457.5" width="58" height="12.2" fill="#cfe6f8"/>
<text x="763.7" y="467.1" font-size="11.500" fill="#111" textLength="48.3" lengthAdjust="spacing">1 мин (35)</text>
<rect x="951.4" y="452" width="56.3" height="12.3" fill="#cfe6f8"/>
<text x="955" y="461.7" font-size="11.500" fill="#111" textLength="49" lengthAdjust="spacing">2 мин (37)</text>
<rect x="999.3" y="482.6" width="63.4" height="12.3" fill="#cfe6f8"/>
<text x="1010" y="492.3" font-size="11.500" fill="#111" textLength="48" lengthAdjust="spacing">1 мин (79)</text>
<path d="M1004.500 487v1.500M1004.500 491v1.500" stroke="#7fa8c9" stroke-width="1.200"/>
<rect x="537.5" y="473.7" width="20.5" height="20.5" rx="4" fill="#1e8bdc" stroke="#f4f9fd" stroke-width="1.600"/>
<path d="M543.8 490v-11.500h4.600a3.300 3.300 0 0 1 0 6.600h-4.600" fill="none" stroke="#fff" stroke-width="2.600"/>
<rect x="733.6" y="453.3" width="20.5" height="20.5" rx="4" fill="#1e8bdc" stroke="#f4f9fd" stroke-width="1.600"/>
<path d="M739.9 469.6v-11.500h4.600a3.300 3.300 0 0 1 0 6.600h-4.600" fill="none" stroke="#fff" stroke-width="2.600"/>
<rect x="1013.6" y="447.7" width="20.5" height="20.5" rx="4" fill="#1e8bdc" stroke="#f4f9fd" stroke-width="1.600"/>
<path d="M1019.9 464v-11.500h4.600a3.300 3.300 0 0 1 0 6.600h-4.600" fill="none" stroke="#fff" stroke-width="2.600"/>
<rect x="1067.6" y="477.4" width="20.5" height="20.5" rx="4" fill="#1e8bdc" stroke="#f4f9fd" stroke-width="1.600"/>
<path d="M1073.9 493.7v-11.500h4.600a3.300 3.300 0 0 1 0 6.600h-4.600" fill="none" stroke="#fff" stroke-width="2.600"/>
<rect x="555" y="485.400" width="100" height="18.100" fill="#fbeec0"/><text x="598.200" y="500.600" font-size="11.500" fill="#222" textLength="48.600" lengthAdjust="spacing">(Шершни)</text>
<path d="M549 500.500h2M553 501h3M559 500.500h2M564 501h3M569 500.500h2M575 501h2M581 500.500h3M587 501h2" stroke="#6f6b58" stroke-width="1.200"/>
<rect x="544.900" y="486.900" width="49.100" height="12.900" fill="#fcf5cf"/><text x="548.900" y="496.500" font-size="11.500" fill="#222" textLength="42" lengthAdjust="spacing">Стоянка</text>
<rect x="531.500" y="497" width="17.500" height="11" rx="3" fill="#fdfdfd"/><rect x="533" y="499" width="14.500" height="7.500" rx="2" fill="#b78fdc" stroke="#1a1a1a" stroke-width="1.200"/>
<rect x="540.500" y="489" width="4" height="8" rx="2" fill="#6fb54a"/>
<rect x="518" y="480.800" width="23.500" height="21.500" rx="4" fill="#fdfdfd"/>
<rect x="520.800" y="483.500" width="18.500" height="17.200" rx="2.500" fill="#f3f0dc" stroke="#141414" stroke-width="1.500"/>
<path d="M523 485.500v13M537 485.500v13" stroke="#141414" stroke-width="1.200"/>
<circle cx="529.900" cy="491.500" r="5.600" fill="#fff"/><circle cx="529.900" cy="491.500" r="4.100" fill="#f01414"/>
<rect x="524.500" y="497" width="4" height="2.800" fill="#e8c81c"/><rect x="531.500" y="497" width="4" height="2.800" fill="#e8c81c"/>
<path d="M568 418h119a3 3 0 0 1 3 3v43.200l13 15.500-27-11.500h-108a3 3 0 0 1 -3-3v-44.200a3 3 0 0 1 3-3z" fill="#f20000"/>
<text x="571" y="432" font-size="11.500" fill="#5e0606" stroke="#5e0606" stroke-width="0.250" lengthAdjust="spacing" textLength="67.500">Точка трека:</text>
<text x="570.500" y="446.500" font-size="11.500" fill="#5e0606" stroke="#5e0606" stroke-width="0.250" lengthAdjust="spacing" textLength="101" xml:space="preserve">9.01.09  18:56:42  пт</text>
<text x="570.500" y="461.900" font-size="11.500" fill="#5e0606" stroke="#5e0606" stroke-width="0.250" lengthAdjust="spacing" textLength="115">Скорость: 102,3 км/ч</text>
<path d="M701.500 473L722.400 476 704 491.700z" fill="#fbfbfb" stroke="#5a5a5a" stroke-width="1" stroke-linejoin="round"/><path d="M703.300 474.300L720.500 476.600 707.500 485.500z" fill="#f00c0c"/>
<rect x="517" y="577" width="305" height="14.500" fill="#2b2b2b"/>
<g font-size="11" font-weight="bold" fill="#fff" lengthAdjust="spacing"><text x="528.200" y="588.200" textLength="40.800">9.01.09</text><text x="583.800" y="588.200" textLength="47">18:58:27</text><text x="649.200" y="588.200" textLength="45">93 км/ч</text><text x="770.400" y="588.200" textLength="49">157,4 км</text></g>
<rect x="698.5" y="586" width="1.900" height="3.5" fill="#3cc828"/>
<rect x="701.35" y="585.69" width="1.900" height="3.81" fill="#4fc828"/>
<rect x="704.2" y="585.38" width="1.900" height="4.12" fill="#62c828"/>
<rect x="707.05" y="585.07" width="1.900" height="4.43" fill="#75c828"/>
<rect x="709.9" y="584.76" width="1.900" height="4.74" fill="#88c828"/>
<rect x="712.75" y="584.45" width="1.900" height="5.05" fill="#9bc828"/>
<rect x="715.6" y="584.14" width="1.900" height="5.36" fill="#aec828"/>
<rect x="718.45" y="583.83" width="1.900" height="5.67" fill="#c1c828"/>
<rect x="721.3" y="583.52" width="1.900" height="5.98" fill="#d4c828"/>
<rect x="724.15" y="583.21" width="1.900" height="6.29" fill="#e7c828"/>
<rect x="727" y="582.9" width="1.900" height="6.6" fill="#e6c828"/>
<rect x="729.85" y="582.59" width="1.900" height="6.91" fill="#e6b728"/>
<rect x="732.7" y="582.28" width="1.900" height="7.22" fill="#e6a628"/>
<rect x="735.55" y="581.97" width="1.900" height="7.53" fill="#e69528"/>
<rect x="738.4" y="581.66" width="1.900" height="7.84" fill="#e68428"/>
<rect x="741.25" y="581.35" width="1.900" height="8.15" fill="#e67328"/>
<rect x="744.1" y="581.04" width="1.900" height="8.46" fill="#e66128"/>
<rect x="746.95" y="580.73" width="1.900" height="8.77" fill="#e65128"/>
<rect x="749.8" y="580.42" width="1.900" height="9.08" fill="#e64028"/>
<rect x="752.65" y="580.11" width="1.900" height="9.39" fill="#e62f28"/>
<rect x="755.5" y="579.8" width="1.900" height="9.7" fill="#e61e28"/>
</svg>
<div class="a" style="left:511px;top:596px;width:585px;height:5px;background:#fff"></div>
<svg class="a" style="left:511px;top:600px" width="585" height="67" viewBox="511 600 585 67" font-family="Liberation Sans, sans-serif">
<rect x="511" y="600" width="585" height="67" fill="#c8c8c8"/><rect x="511" y="600" width="585" height="1" fill="#e6e6e6"/>
<g font-size="12" fill="#8c8a3c" letter-spacing="-0.450"><text x="513.300" y="614.200">(Speed) 120,0</text><text x="560" y="631">60,0</text><text x="566.500" y="648">0,0</text></g>
<path d="M511 617.500h585M511 651.300h585" stroke="#0a0a0a" stroke-width="1.200"/>
<g stroke="#111" stroke-width="1.200" stroke-dasharray="3.500 3.500"><path d="M511 634.500h585"/>
<path d="M528.5 617v50"/>
<path d="M625.5 617v50"/>
<path d="M722.5 617v50"/>
<path d="M819.7 617v50"/>
<path d="M917 617v50"/>
<path d="M1014 617v50"/>
</g>
<rect x="802.800" y="617" width="2.200" height="50" fill="#0a0a0a"/><rect x="511.800" y="617" width="1.200" height="50" fill="#0a0a0a"/>
<path d="M513.5 633.4 L516.5 632.8 L518.6 621.4 L521.0 628.3 L522.5 621.4 L528.5 620.8 L529.9 618.4 L541.9 618.4 L544.3 626.8 L547.3 622.3 L552.4 619.3 L564.4 619.3 L571.9 623.2 L578.5 625.3 L583.9 628.3 L589.8 627.4 L595.8 629.8 L600.3 628.3 L603.3 622.3 L605.4 629.8 L607.8 641.8 L610.2 632.8 L613.8 625.3 L621.3 623.2 L624.3 628.3 L626.4 632.8 L629.4 626.8 L633.3 620.8 L638.4 620.8 L639.3 625.3 L640.8 617.8 L643.8 615.4 L649.7 614.8 L652.1 611.8 L654.5 611.8 L655.7 616.3 L676.7 617.2 L679.1 625.3 L680.6 628.3 L682.7 621.4 L685.1 617.2 L688.7 620.8 L703.7 622.3 L706.6 618.4 L726.1 618.4 L728.2 625.3 L730.6 621.4 L735.1 622.3 L739.6 619.3 L748.6 619.3 L751.6 621.4 L766.5 623.2 L772.5 628.3 L777.0 631.3 L783.0 629.8 L786.9 622.3 L789.9 622.3 L795.0 632.8 L798.0 641.8 L800.0 630.3 L802.4 623.1 L810.5 620.7 L818.0 621.3 L819.5 628.2 L821.0 620.7 L841.9 620.1 L844.9 616.3 L847.9 613.3 L851.5 613.3 L853.3 617.2 L855.4 618.4 L858.4 623.7 L861.4 618.4 L864.4 615.4 L892.8 616.3 L895.8 618.4 L898.8 623.7 L904.8 623.7 L907.8 617.2 L912.2 616.3 L916.7 619.2 L922.7 618.4 L925.7 617.2 L936.2 617.8 L938.3 623.7 L940.7 649.2 L949.1 649.2 L951.2 629.7 L954.1 616.3 L957.1 614.8 L975.1 614.8 L978.1 620.7 L981.1 619.2 L984.1 616.3 L987.1 614.2 L1002.0 614.2 L1005.0 611.2 L1007.1 614.8 L1014.0 616.3 L1017.0 619.2 L1023.0 620.1 L1027.5 623.1 L1032.0 625.2 L1035.0 629.1 L1040.9 629.7 L1045.4 625.2 L1048.4 616.3 L1051.4 615.4 L1069.4 616.3 L1072.4 615.4 L1087.3 615.4 L1094.8 616.9" fill="none" stroke="#8f8d2c" stroke-width="1.200" stroke-linejoin="round"/>
<g font-size="12" fill="#1a1a1a">
<text x="530" y="663.700" textLength="26.500" lengthAdjust="spacing">18:30</text>
<text x="627" y="663.700" textLength="26.500" lengthAdjust="spacing">18:40</text>
<text x="724" y="663.700" textLength="26.500" lengthAdjust="spacing">18:50</text>
<text x="821.2" y="663.700" textLength="26.500" lengthAdjust="spacing">19:00</text>
<text x="918.5" y="663.700" textLength="26.500" lengthAdjust="spacing">19:10</text>
<text x="1015.5" y="663.700" textLength="26.500" lengthAdjust="spacing">19:20</text>
</g></svg>
<svg class="a" style="left:504px;top:669px" width="600" height="30" viewBox="504 669 600 30" font-family="Liberation Sans, sans-serif">
<circle cx="522.5" cy="683.800" r="7.800" fill="#4f9aec"/>
<circle cx="545.5" cy="683.800" r="7.800" fill="#4f9aec"/>
<circle cx="568.3" cy="683.800" r="7.800" fill="#4f9aec"/>
<circle cx="591.3" cy="683.800" r="7.800" fill="#4f9aec"/>
<circle cx="614.4" cy="683.800" r="7.800" fill="#4f9aec"/>
<circle cx="820.4" cy="683.800" r="7.800" fill="#4f9aec"/>
<circle cx="843.4" cy="683.800" r="7.800" fill="#4f9aec"/>
<circle cx="874.2" cy="683.800" r="7.800" fill="#4f9aec"/>
<circle cx="1062.4" cy="683.800" r="7.800" fill="#4f9aec"/>
<circle cx="1085.4" cy="683.800" r="7.800" fill="#4f9aec"/>
<g fill="#fff" stroke="none">
<path d="M519 680h1.500v7.500h-1.500zM526 680v7.500l-5-3.750z"/>
<path d="M545.500 680v7.500l-4.500-3.750zM550 680v7.500l-4.500-3.750z"/>
<path d="M565.800 679.500v8.500l6.200-4.250z"/>
<path d="M587 680v7.500l4.500-3.750zM591.500 680v7.500l4.500-3.750z"/>
<path d="M611 680v7.500l5-3.750zM616.500 680h1.500v7.500h-1.500z"/>
</g>
<g fill="none" stroke="#fff" stroke-width="1.200"><rect x="816.300" y="680.300" width="3" height="7" rx="1.500"/><rect x="821.500" y="680.300" width="3" height="7" rx="1.500"/>
<rect x="838.800" y="680.300" width="2.800" height="7" rx="1.400"/><rect x="845.200" y="680.300" width="2.800" height="7" rx="1.400"/><path d="M843.400 679.500v8.500"/></g>
<path d="M870 688l9-9M872 681.500l6 4M874.500 679.500l2 6" stroke="#fff" stroke-width="2" fill="none"/>
<path d="M637.500 689v-12.500h101.500" fill="none" stroke="#a9adb3"/><path d="M638.500 688.500h100.500v-11.500" fill="none" stroke="#fff"/>
<path d="M640.500 690v3M664.500 690v3M688.500 690v3M712.500 690v3M736.500 690v3" stroke="#b9b9b9"/>
<path d="M713.500 677.500h6v7l-3 3-3-3z" fill="#f4f4f4" stroke="#8b8b8b" stroke-width="0.900"/>
<rect x="751.500" y="673.500" width="49" height="20" rx="1.500" fill="#fdfdfd" stroke="#a9b7cf"/>
<text x="754.600" y="687" font-size="12" fill="#111" textLength="16.400" lengthAdjust="spacing">10x</text>
<rect x="783" y="676.500" width="15.500" height="7" fill="#eceef2" stroke="#b3b9c4" stroke-width="0.800"/><rect x="783" y="684" width="15.500" height="7" fill="#eceef2" stroke="#b3b9c4" stroke-width="0.800"/><path d="M787.300 681.500h7l-3.500-3.500z" fill="#5573a8"/><path d="M787.300 686h7l-3.500 3.500z" fill="#5573a8"/>
<rect x="857.500" y="675" width="1" height="18" fill="#8f8f8f"/>
<rect x="887" y="674.300" width="21.5" height="19" rx="2.500" fill="#cfd3d8" stroke="#6f6f6f" stroke-width="1.200"/>
<rect x="910" y="674.300" width="21.3" height="19" rx="2.500" fill="#cfd3d8" stroke="#6f6f6f" stroke-width="1.200"/>
<circle cx="897.700" cy="683.800" r="7.600" fill="#4f9aec"/><circle cx="920.700" cy="683.800" r="7.600" fill="#4f9aec"/>
<path d="M893 686.500l3.500-5.500 5.500 4M896.500 681l4-1.500" stroke="#fff" stroke-width="1.800" fill="none"/>
<path d="M918.200 688v-8h3.300a2.300 2.300 0 0 1 0 4.600h-3.300" fill="none" stroke="#fff" stroke-width="1.800"/>
<rect x="934" y="674.300" width="10.500" height="19" rx="2" fill="#e3e3e3" stroke="#8a8a8a" stroke-width="0.900"/><rect x="935" y="684" width="8.500" height="8.500" fill="#bdbdbd"/><path d="M936 683.500h6.500l-3.250 3.500z" fill="#111"/>
<rect x="948.500" y="675" width="1" height="18" fill="#8f8f8f"/>
<rect x="954.3" y="674.300" width="21.7" height="19" rx="2.500" fill="#cfd3d8" stroke="#6f6f6f" stroke-width="1.200"/>
<circle cx="965.200" cy="683.800" r="7.600" fill="#4f9aec"/><path d="M962 680h6.500v8h-6.500zM963.500 679h3.500v1.500h-3.500z" fill="#cfe4fb" stroke="#e9f3ff" stroke-width="0.800"/><path d="M963.300 682.500l4 4M967.300 682.500l-4 4" stroke="#4f9aec" stroke-width="0.900"/>
<rect x="978.800" y="674.300" width="10.500" height="19" rx="2" fill="#e3e3e3" stroke="#8a8a8a" stroke-width="0.900"/><rect x="979.800" y="684" width="8.500" height="8.500" fill="#bdbdbd"/><path d="M980.800 683.500h6.500l-3.250 3.500z" fill="#111"/>
<rect x="996.500" y="673.500" width="49.500" height="20" rx="1" fill="#f7f7f8" stroke="#b9b9b9"/>
<text x="999.600" y="687.500" font-size="12" fill="#9a9a9a" textLength="20.400" lengthAdjust="spacing">10%</text>
<rect x="1029.500" y="676.500" width="14.500" height="7" fill="#f4f4f4" stroke="#c3c3c3" stroke-width="0.800"/><rect x="1029.500" y="684" width="14.500" height="7" fill="#f4f4f4" stroke="#c3c3c3" stroke-width="0.800"/><path d="M1034 681.500h6l-3-3z" fill="#9c9c9c"/><path d="M1034 686h6l-3 3z" fill="#9c9c9c"/>
<path d="M1058.500 680.500h8v5.500h-8z" fill="none" stroke="#fff" stroke-width="1.400"/><path d="M1059.500 687.500v1.500M1065.500 687.500v1.500" stroke="#fff" stroke-width="1.500"/>
<rect x="1081.500" y="680" width="8" height="7.500" fill="none" stroke="#fff" stroke-width="1.200"/><path d="M1084 685l4-4M1085.500 680.800h2.700v2.700" stroke="#fff" stroke-width="1.200" fill="none"/>
</svg>
<div class="a" style="left:1105px;top:87px;width:1px;height:613px;background:#b5b5b5"></div>
<svg class="a" style="left:1095px;top:708px" width="11" height="11"><g fill="#b5b5b5"><rect x="8" y="1" width="2" height="2"/><rect x="8" y="5" width="2" height="2"/><rect x="8" y="9" width="2" height="2"/><rect x="4" y="5" width="2" height="2"/><rect x="4" y="9" width="2" height="2"/><rect x="0" y="9" width="2" height="2"/></g></svg>
<svg class="a" style="left:0;top:0;pointer-events:none" width="1114" height="728" viewBox="0 0 1114 728" font-family="Liberation Sans, sans-serif">
<defs><marker id="ah" markerWidth="12" markerHeight="10" refX="9.500" refY="4.500" orient="auto" markerUnits="userSpaceOnUse"><path d="M0 0.300L10 4.500 0 8.700z" fill="#ff0d0d"/></marker></defs>
<path d="M147.4 268L161.7 335" stroke="#ff0d0d" stroke-width="2" marker-end="url(#ah)"/>
<circle cx="143.7" cy="250" r="17.5" fill="#050505" stroke="#ff1414" stroke-width="2.400"/>
<text x="143.7" y="258.4" font-size="23.500" font-weight="bold" fill="#ff1414" text-anchor="middle">1</text>
<path d="M304.5 486.5L277 448.2" stroke="#ff0d0d" stroke-width="2" marker-end="url(#ah)"/>
<circle cx="315.4" cy="502.1" r="17.5" fill="#050505" stroke="#ff1414" stroke-width="2.400"/>
<text x="315.4" y="510.5" font-size="23.500" font-weight="bold" fill="#ff1414" text-anchor="middle">2</text>
<path d="M194.6 628L193 667.5" stroke="#ff0d0d" stroke-width="2" marker-end="url(#ah)"/>
<circle cx="195.4" cy="610.1" r="17.5" fill="#050505" stroke="#ff1414" stroke-width="2.400"/>
<text x="195.4" y="618.5" font-size="23.500" font-weight="bold" fill="#ff1414" text-anchor="middle">3</text>
<path d="M338.5 619L380.2 664.2" stroke="#ff0d0d" stroke-width="2" marker-end="url(#ah)"/>
<circle cx="326" cy="603.7" r="17.5" fill="#050505" stroke="#ff1414" stroke-width="2.400"/>
<text x="326" y="612.1" font-size="23.500" font-weight="bold" fill="#ff1414" text-anchor="middle">4</text>
<path d="M787 514L713.8 482.7" stroke="#ff0d0d" stroke-width="2" marker-end="url(#ah)"/>
<circle cx="805.7" cy="522.9" r="18.8" fill="#050505" stroke="#ff1414" stroke-width="2.400"/>
<text x="805.7" y="531.3" font-size="23.500" font-weight="bold" fill="#ff1414" text-anchor="middle">5</text>
<g transform="translate(-3 -1)"><path d="M14 11.500c4 0 11 2.500 14 7M14 14.500c3 0.500 7 1.500 9 3.500M15 18.500l6-0.500M14.500 22l6.500-2.500" fill="none" stroke="#1b1b3a" stroke-width="1"/><circle cx="21.500" cy="18" r="2.600" fill="#3d3f9a"/><path d="M22 14.500c3 1 5 3 6 5-1.500 1-4 1-5.500 0.500" fill="#eef1f8" stroke="#9aa0b8" stroke-width="0.600"/></g>
<defs><linearGradient id="cb" x1="0" y1="0" x2="0" y2="1"><stop offset="0" stop-color="#dfe8f3"/><stop offset="0.450" stop-color="#c9d6e6"/><stop offset="0.500" stop-color="#b3c4d9"/><stop offset="1" stop-color="#c9d9ea"/></linearGradient><linearGradient id="cr" x1="0" y1="0" x2="0" y2="1"><stop offset="0" stop-color="#f0aaa2"/><stop offset="0.450" stop-color="#ea8a80"/><stop offset="0.480" stop-color="#c4512f"/><stop offset="0.800" stop-color="#cc5c3c"/><stop offset="1" stop-color="#e89a8a"/></linearGradient></defs>
<rect x="1016.500" y="10.500" width="27" height="14" rx="2.500" fill="url(#cb)" stroke="#3f4a5c"/><rect x="1045.500" y="10.500" width="27.500" height="14" rx="2.500" fill="url(#cb)" stroke="#3f4a5c"/><rect x="1076.700" y="10.700" width="26.800" height="13.600" rx="2.500" fill="url(#cr)" stroke="#2a1a2e" stroke-width="1.300"/><rect x="1077.800" y="11.800" width="24.600" height="11.400" rx="1.500" fill="none" stroke="#fbd9d2" stroke-width="0.800" opacity="0.800"/>
<rect x="1025" y="18.500" width="10" height="3.500" fill="#fff" stroke="#4a5568" stroke-width="0.900"/>
<rect x="1054.500" y="13.500" width="9.500" height="8" fill="#fff" stroke="#4a5568" stroke-width="0.900"/><rect x="1057.500" y="16.500" width="3.500" height="2.500" fill="#b9c8dc" stroke="#4a5568" stroke-width="0.800"/>
<path d="M1085.500 14l8.500 6.500M1094 14l-8.500 6.500" stroke="#4a3030" stroke-width="4.200" stroke-linecap="round"/><path d="M1085.500 14l8.500 6.500M1094 14l-8.500 6.500" stroke="#fff" stroke-width="2.500" stroke-linecap="butt"/>
</svg>

</body></html>
